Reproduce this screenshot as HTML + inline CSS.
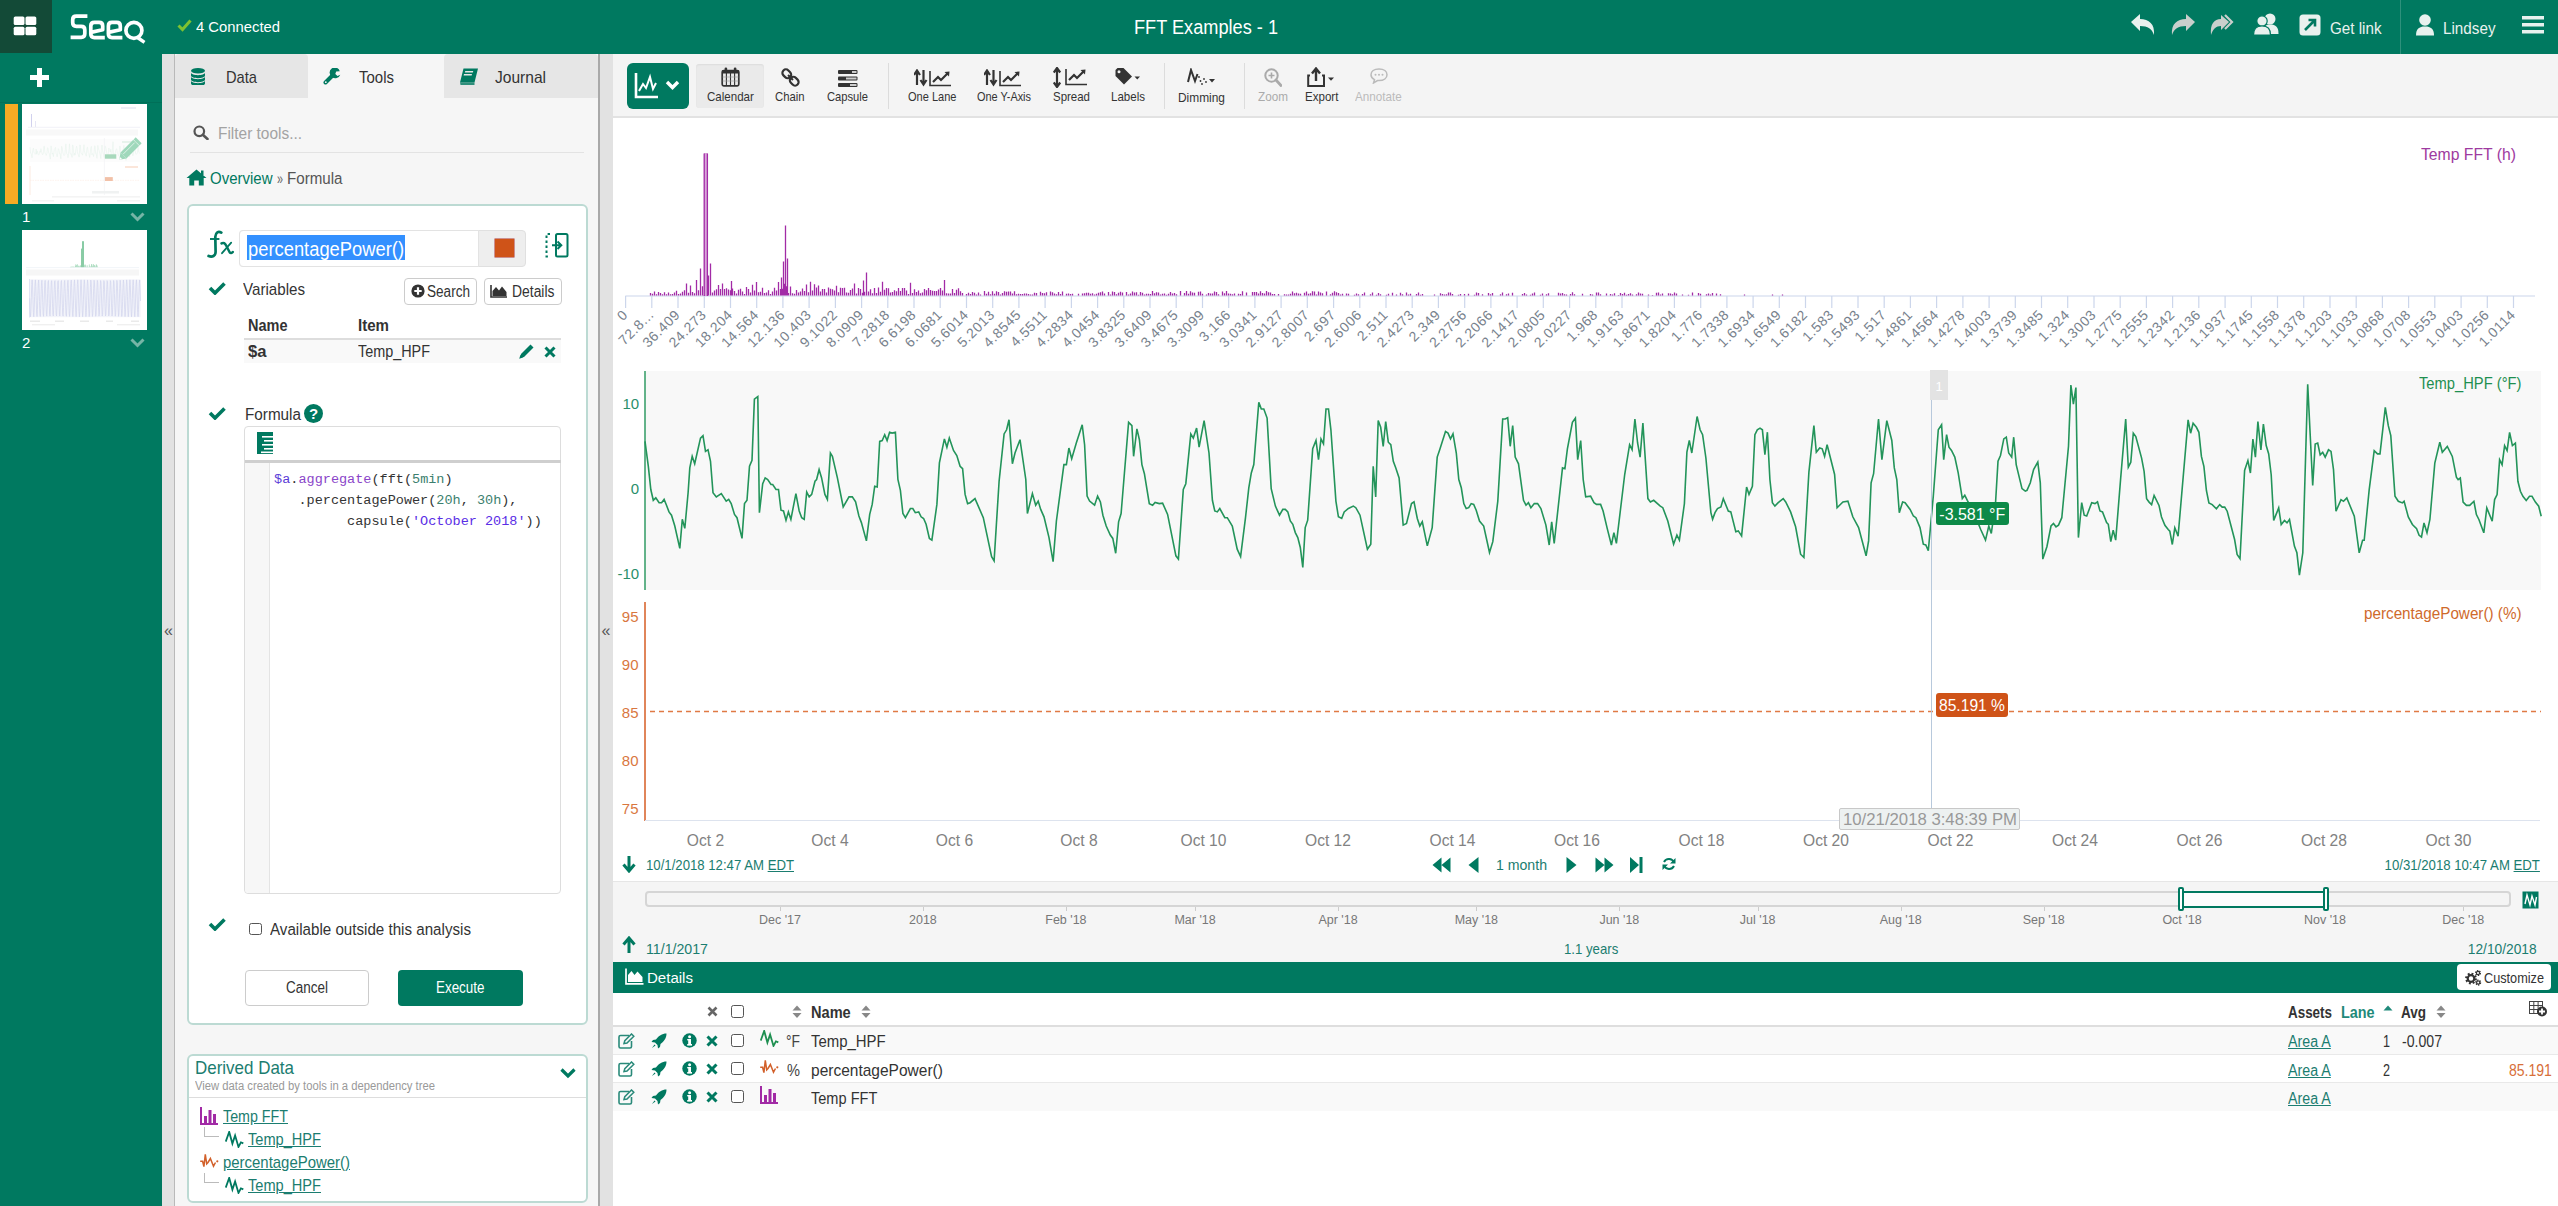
<!DOCTYPE html>
<html><head><meta charset="utf-8"><title>Seeq</title>
<style>
html,body{margin:0;padding:0;width:2558px;height:1206px;overflow:hidden;background:#fff;font-family:'Liberation Sans', sans-serif;}
body{position:relative;}
svg{display:block;}
</style></head><body>
<div style="position:absolute;left:0px;top:0px;width:2558px;height:54px;background:#007960;"></div>
<div style="position:absolute;left:0px;top:0px;width:52px;height:53px;background:#134a37;"></div>
<svg style="position:absolute;left:13px;top:16px;" width="25" height="20" viewBox="0 0 25 20"><rect x="0.7" y="0.4" width="10.8" height="8.6" rx="1.6" fill="#fff"/><rect x="0.7" y="10.7" width="10.8" height="8.6" rx="1.6" fill="#fff"/><rect x="12.5" y="0.4" width="10.8" height="8.6" rx="1.6" fill="#fff"/><rect x="12.5" y="10.7" width="10.8" height="8.6" rx="1.6" fill="#fff"/></svg>
<svg style="position:absolute;left:60px;top:5px;" width="100" height="45" viewBox="60 5 100 45"><g fill="none" stroke="#fff" stroke-width="3.7" stroke-linejoin="round"><path d="M87.4 16.1 L76.3 16.1 Q72.7 16.1 72.7 19.7 L72.7 22.7 Q72.7 26.3 76.3 26.3 L81.2 26.3 Q84.8 26.3 84.8 29.9 L84.8 33.7 Q84.8 37.3 81.2 37.3 L70.6 37.3"/><path d="M104.8 37.6 L94.4 37.6 Q90.8 37.6 90.8 34 L90.8 26 Q90.8 22.4 94.4 22.4 L99.1 22.4 Q102.7 22.4 102.7 26 L102.7 29.8 L90.8 32.4"/><path d="M122.4 37.6 L112 37.6 Q108.4 37.6 108.4 34 L108.4 26 Q108.4 22.4 112 22.4 L116.7 22.4 Q120.3 22.4 120.3 26 L120.3 29.8 L108.4 32.4"/><circle cx="133.9" cy="30.4" r="8"/><path d="M137.5 37.5 L144.5 42.3" stroke-width="3.4"/></g><path d="M135.5 23.2 A7.5 7.5 0 0 1 135.8 37.5" fill="none" stroke="#fff" stroke-width="0.8" opacity="0.6"/></svg>
<svg style="position:absolute;left:177px;top:19px;" width="15" height="13" viewBox="0 0 15 13"><polyline points="1.5,6.5 5.5,10.5 13.5,1.5" fill="none" stroke="#7dc231" stroke-width="3"/></svg>
<span style="position:absolute;left:196.00px;top:19.00px;font:400 15.5px/15.5px 'Liberation Sans', sans-serif;color:#fff;white-space:nowrap;transform:scaleX(0.9556);transform-origin:left 0;">4 Connected</span>
<span style="position:absolute;left:1133.70px;top:16.51px;font:400 20px/20px 'Liberation Sans', sans-serif;color:#fff;white-space:nowrap;transform:scaleX(0.9082);transform-origin:left 0;">FFT Examples - 1</span>
<svg style="position:absolute;left:2130px;top:13px;" width="26" height="23" viewBox="0 0 26 23"><path d="M1 9 L10 1 L10 6 C19 6 25 11 24 22 C22 16 18 13 10 13 L10 18 Z" fill="#e8f1ee"/></svg>
<svg style="position:absolute;left:2170px;top:13px;" width="26" height="23" viewBox="0 0 26 23"><path d="M25 9 L16 1 L16 6 C7 6 1 11 2 22 C4 16 8 13 16 13 L16 18 Z" fill="#c9cfcc"/></svg>
<svg style="position:absolute;left:2210px;top:13px;" width="27" height="23" viewBox="0 0 27 23"><path d="M19 9 L11 2 L11 6 C4 6 0 11 1 22 C3 16 6 13 11 13 L11 17 Z" fill="#c9cfcc"/><path d="M15 2 L22 9 L15 16" fill="none" stroke="#c9cfcc" stroke-width="2.2"/></svg>
<svg style="position:absolute;left:2253px;top:13px;" width="26" height="22" viewBox="0 0 26 22"><circle cx="17" cy="6" r="5.5" fill="#e8f1ee"/><path d="M10 21 C10 14 12 11.5 17 11.5 C23 11.5 25.5 14 25.5 21 Z" fill="#e8f1ee"/><circle cx="9" cy="8" r="5.2" fill="#e8f1ee" stroke="#007960" stroke-width="1.2"/><path d="M0.5 22 C0.5 16 3 13 9 13 C15 13 17.5 16 17.5 22 Z" fill="#e8f1ee" stroke="#007960" stroke-width="1.2"/></svg>
<svg style="position:absolute;left:2299px;top:14px;" width="22" height="22" viewBox="0 0 22 22"><rect x="0.5" y="0.5" width="21" height="21" rx="3.5" fill="#e8f1ee"/><path d="M6 16 L15 7 M9.5 6 L16 6 L16 12.5" fill="none" stroke="#007960" stroke-width="2.6"/></svg>
<span style="position:absolute;left:2329.50px;top:19.71px;font:400 17px/17px 'Liberation Sans', sans-serif;color:#e8f1ee;white-space:nowrap;transform:scaleX(0.8935);transform-origin:left 0;">Get link</span>
<div style="position:absolute;left:2400px;top:0px;width:1px;height:54px;background:rgba(255,255,255,0.18);"></div>
<svg style="position:absolute;left:2416px;top:14px;" width="18" height="22" viewBox="0 0 18 22"><circle cx="9" cy="6" r="5.8" fill="#e8f1ee"/><path d="M0 21.5 C0 15 3 12.5 9 12.5 C15 12.5 18 15 18 21.5 Z" fill="#e8f1ee"/></svg>
<span style="position:absolute;left:2443.00px;top:19.71px;font:400 17px/17px 'Liberation Sans', sans-serif;color:#e8f1ee;white-space:nowrap;transform:scaleX(0.8958);transform-origin:left 0;">Lindsey</span>
<svg style="position:absolute;left:2522px;top:16px;" width="22" height="18" viewBox="0 0 22 18"><rect x="0" y="0" width="22" height="3.5" fill="#e8f1ee"/><rect x="0" y="7" width="22" height="3.5" fill="#e8f1ee"/><rect x="0" y="14" width="22" height="3.5" fill="#e8f1ee"/></svg>
<div style="position:absolute;left:0px;top:54px;width:162px;height:1152px;background:#007960;"></div>
<svg style="position:absolute;left:30px;top:68px;" width="19" height="19" viewBox="0 0 19 19"><rect x="7" y="0" width="5" height="19" fill="#fff"/><rect x="0" y="7" width="19" height="5" fill="#fff"/></svg>
<div style="position:absolute;left:0px;top:102px;width:162px;height:1px;background:rgba(0,0,0,0.08);"></div>
<div style="position:absolute;left:5px;top:103.5px;width:13px;height:100px;background:#f7ab24;"></div>
<div style="position:absolute;left:22px;top:103.5px;width:125px;height:100px;background:#fff;"></div>
<div style="position:absolute;left:22px;top:229.5px;width:125px;height:100px;background:#fff;"></div>
<span style="position:absolute;left:22.00px;top:208.51px;font:400 15px/15px 'Liberation Sans', sans-serif;color:#fff;white-space:nowrap;">1</span>
<span style="position:absolute;left:22.00px;top:334.51px;font:400 15px/15px 'Liberation Sans', sans-serif;color:#fff;white-space:nowrap;">2</span>
<svg style="position:absolute;left:130px;top:212px;" width="15" height="10" viewBox="0 0 15 10"><polyline points="1.5,1.5 7.5,7.5 13.5,1.5" fill="none" stroke="#76b5a6" stroke-width="3"/></svg>
<svg style="position:absolute;left:130px;top:338px;" width="15" height="10" viewBox="0 0 15 10"><polyline points="1.5,1.5 7.5,7.5 13.5,1.5" fill="none" stroke="#76b5a6" stroke-width="3"/></svg>
<div style="position:absolute;left:162px;top:54px;width:13px;height:1152px;background:#e2e2e2;"></div>
<div style="position:absolute;left:174px;top:54px;width:1px;height:1152px;background:#b9b9b9;"></div>
<div style="position:absolute;left:175px;top:54px;width:423px;height:1152px;background:#f6f6f6;"></div>
<div style="position:absolute;left:598px;top:54px;width:1.5px;height:1152px;background:#a9a9a9;"></div>
<div style="position:absolute;left:599.5px;top:54px;width:13px;height:1152px;background:#e2e2e2;"></div>
<span style="position:absolute;left:164.05px;top:623.00px;font:400 16px/16px 'Liberation Sans', sans-serif;color:#555;white-space:nowrap;">&laquo;</span>
<span style="position:absolute;left:601.55px;top:623.00px;font:400 16px/16px 'Liberation Sans', sans-serif;color:#555;white-space:nowrap;">&laquo;</span>
<div style="position:absolute;left:175px;top:54px;width:132.5px;height:44px;background:#e6e6e6;border-radius:4px 4px 0 0;"></div>
<div style="position:absolute;left:444px;top:54px;width:154px;height:44px;background:#e6e6e6;border-radius:4px 4px 0 0;"></div>
<svg style="position:absolute;left:191px;top:68px;" width="14" height="17" viewBox="0 0 14 17"><ellipse cx="7" cy="2.8" rx="7" ry="2.8" fill="#007960"/><path d="M0 4.5 C0 8.0 14 8.0 14 4.5 L14 7.5 C14 11.0 0 11.0 0 7.5 Z" fill="#007960"/><path d="M0 8.5 C0 12.0 14 12.0 14 8.5 L14 11.5 C14 15.0 0 15.0 0 11.5 Z" fill="#007960"/><path d="M0 12.5 C0 16.0 14 16.0 14 12.5 L14 15.5 C14 19.0 0 19.0 0 15.5 Z" fill="#007960"/></svg>
<span style="position:absolute;left:226.00px;top:68.70px;font:400 16.2px/16.2px 'Liberation Sans', sans-serif;color:#333;white-space:nowrap;transform:scaleX(0.9063);transform-origin:left 0;">Data</span>
<svg style="position:absolute;left:323px;top:68px;" width="18" height="18" viewBox="0 0 18 18"><path d="M2.5 14.5 L10 7" stroke="#007960" stroke-width="4" stroke-linecap="round"/><path d="M9 9 A5.2 5.2 0 1 1 16.8 3.2 L13.2 3.6 L12.3 6 L14.5 8 L17.3 6.8 A5.2 5.2 0 0 1 9 9 Z" fill="#007960"/><circle cx="2.8" cy="14.2" r="0.9" fill="#f6f6f6"/></svg>
<span style="position:absolute;left:358.80px;top:69.11px;font:400 16.5px/16.5px 'Liberation Sans', sans-serif;color:#333;white-space:nowrap;transform:scaleX(0.9084);transform-origin:left 0;">Tools</span>
<svg style="position:absolute;left:459px;top:68px;" width="20" height="18" viewBox="0 0 20 18"><path d="M4.5 0.5 L19 0.5 L15.5 14.5 L1 14.5 Z" fill="#007960"/><path d="M1 14.5 L15.5 14.5 L15.5 17 L1.5 17 Z" fill="#007960" opacity="0.8"/><rect x="7" y="3" width="8" height="1.6" fill="#e6e6e6" transform="skewX(-14)"/><rect x="6.5" y="6" width="8" height="1.6" fill="#e6e6e6" transform="skewX(-14)"/></svg>
<span style="position:absolute;left:495.00px;top:69.11px;font:400 16.5px/16.5px 'Liberation Sans', sans-serif;color:#333;white-space:nowrap;transform:scaleX(0.9423);transform-origin:left 0;">Journal</span>
<svg style="position:absolute;left:193px;top:125px;" width="16" height="15" viewBox="0 0 16 15"><circle cx="6.3" cy="6.3" r="4.8" fill="none" stroke="#555" stroke-width="2.2"/><path d="M9.8 9.8 L14.5 14" stroke="#555" stroke-width="2.6" stroke-linecap="round"/></svg>
<span style="position:absolute;left:217.50px;top:125.11px;font:400 16.3px/16.3px 'Liberation Sans', sans-serif;color:#a3a3a3;white-space:nowrap;transform:scaleX(0.9473);transform-origin:left 0;">Filter tools...</span>
<div style="position:absolute;left:189.5px;top:151.5px;width:394px;height:1px;background:#e3e3e3;"></div>
<svg style="position:absolute;left:186px;top:169px;" width="21" height="17" viewBox="0 0 21 17"><path d="M10.5 0.5 L20.5 9 L17.7 9 L17.7 16.5 L12.8 16.5 L12.8 11.5 L8.2 11.5 L8.2 16.5 L3.3 16.5 L3.3 9 L0.5 9 Z" fill="#007960"/><rect x="15" y="1.5" width="2.5" height="4.5" fill="#007960"/></svg>
<span style="position:absolute;left:210.40px;top:169.91px;font:400 16.3px/16.3px 'Liberation Sans', sans-serif;color:#007960;white-space:nowrap;transform:scaleX(0.9210);transform-origin:left 0;">Overview</span>
<span style="position:absolute;left:276.50px;top:169.91px;font:400 16.3px/16.3px 'Liberation Sans', sans-serif;color:#666;white-space:nowrap;transform:scaleX(0.6621);transform-origin:left 0;">&raquo;</span>
<span style="position:absolute;left:287.00px;top:169.91px;font:400 16.3px/16.3px 'Liberation Sans', sans-serif;color:#555;white-space:nowrap;transform:scaleX(0.9294);transform-origin:left 0;">Formula</span>
<div style="position:absolute;left:187.3px;top:203.6px;width:400.4px;height:821.4px;background:#fff;box-sizing:border-box;border:2px solid #bcdad3;border-radius:6px;"></div>
<svg style="position:absolute;left:0px;top:0px;" width="240" height="262" viewBox="0 0 240 262"><g fill="none" stroke="#007960" stroke-linecap="round"><path d="M221.3 232.6 C218.5 230.8 215.6 232.2 215.3 236.8 L215.6 251.8 C215.7 255.8 212.2 257.6 208.6 256" stroke-width="2.7"/><path d="M210 239 L219.4 239" stroke-width="1.9" stroke-linecap="butt"/><path d="M221.5 243.4 C223.5 242.2 225 243.2 226.3 245.8 L229.6 252.2 C230.6 253.6 231.8 253.3 232.8 252" stroke-width="2.5"/><path d="M231.2 242.6 L222 253.2" stroke-width="1.8"/></g></svg>
<div style="position:absolute;left:239.3px;top:229.8px;width:287.2px;height:37px;background:#eee;box-sizing:border-box;border:1px solid #e0e0e0;border-radius:4px;"></div>
<div style="position:absolute;left:239.3px;top:229.8px;width:240.2px;height:37px;background:#fff;box-sizing:border-box;border:1px solid #e3e3e3;border-radius:4px 0 0 4px;"></div>
<div style="position:absolute;left:246.6px;top:235.4px;width:158.4px;height:25.1px;background:#3390ff;"></div>
<span style="position:absolute;left:247.50px;top:238.60px;font:400 20.5px/20.5px 'Liberation Sans', sans-serif;color:#fff;white-space:nowrap;transform:scaleX(0.8948);transform-origin:left 0;">percentagePower()</span>
<div style="position:absolute;left:494.7px;top:238.7px;width:19.1px;height:18.6px;background:#cf5318;box-shadow:0 0 0 0.5px #a33;"></div>
<svg style="position:absolute;left:545px;top:233px;" width="24" height="25" viewBox="0 0 24 25"><path d="M5 1 L1.5 1 L1.5 23.5 L5 23.5" fill="none" stroke="#007960" stroke-width="2" stroke-dasharray="2.4 2.6"/><rect x="11" y="1" width="11.5" height="22.5" rx="1.5" fill="none" stroke="#007960" stroke-width="2"/><path d="M7 12.2 L16 12.2 M12.5 8.5 L16.3 12.2 L12.5 16" fill="none" stroke="#007960" stroke-width="2"/></svg>
<svg style="position:absolute;left:207.5px;top:281px;" width="18" height="14" viewBox="0 0 18 14"><polyline points="2,7 7,12 16.5,2.5" fill="none" stroke="#007960" stroke-width="3.6"/></svg>
<span style="position:absolute;left:243.30px;top:282.40px;font:400 16.6px/16.6px 'Liberation Sans', sans-serif;color:#333;white-space:nowrap;transform:scaleX(0.9124);transform-origin:left 0;">Variables</span>
<div style="position:absolute;left:403.8px;top:277.5px;width:72.8px;height:27px;background:#fff;box-sizing:border-box;border:1px solid #ccc;border-radius:4px;"></div>
<svg style="position:absolute;left:410.5px;top:284px;" width="14" height="14" viewBox="0 0 14 14"><circle cx="7" cy="7" r="6.6" fill="#333"/><path d="M7 3.3 L7 10.7 M3.3 7 L10.7 7" stroke="#fff" stroke-width="2.2"/></svg>
<span style="position:absolute;left:426.50px;top:284.01px;font:400 15.6px/15.6px 'Liberation Sans', sans-serif;color:#333;white-space:nowrap;transform:scaleX(0.8701);transform-origin:left 0;">Search</span>
<div style="position:absolute;left:484px;top:277.5px;width:77.7px;height:27px;background:#fff;box-sizing:border-box;border:1px solid #ccc;border-radius:4px;"></div>
<svg style="position:absolute;left:490px;top:284px;" width="18" height="14" viewBox="0 0 18 14"><path d="M1 1 L1 13 L17 13" fill="none" stroke="#333" stroke-width="1.6"/><path d="M2.5 12 L2.5 7 L6 3 L9 6.5 L12 2.5 L16.5 8 L16.5 12 Z" fill="#333"/></svg>
<span style="position:absolute;left:511.50px;top:284.01px;font:400 15.6px/15.6px 'Liberation Sans', sans-serif;color:#333;white-space:nowrap;transform:scaleX(0.8915);transform-origin:left 0;">Details</span>
<span style="position:absolute;left:248.20px;top:317.60px;font:700 16.6px/16.6px 'Liberation Sans', sans-serif;color:#333;white-space:nowrap;transform:scaleX(0.8738);transform-origin:left 0;">Name</span>
<span style="position:absolute;left:358.20px;top:317.60px;font:700 16.6px/16.6px 'Liberation Sans', sans-serif;color:#333;white-space:nowrap;transform:scaleX(0.9084);transform-origin:left 0;">Item</span>
<div style="position:absolute;left:243.7px;top:337.5px;width:317px;height:2px;background:#ddd;"></div>
<div style="position:absolute;left:243.7px;top:339.5px;width:317px;height:23.5px;background:#f9f9f9;"></div>
<span style="position:absolute;left:248.20px;top:343.01px;font:700 16.2px/16.2px 'Liberation Sans', sans-serif;color:#333;white-space:nowrap;transform:scaleX(1.0269);transform-origin:left 0;">$a</span>
<span style="position:absolute;left:358.20px;top:343.01px;font:400 16.2px/16.2px 'Liberation Sans', sans-serif;color:#333;white-space:nowrap;transform:scaleX(0.8892);transform-origin:left 0;">Temp_HPF</span>
<svg style="position:absolute;left:517.5px;top:343px;" width="17" height="17" viewBox="0 0 17 17"><path d="M2 15 L3 11 L12.5 1.5 L15.5 4.5 L6 14 Z" fill="#007960"/><path d="M1.2 15.8 L2.4 12 L5 14.6 Z" fill="#007960"/></svg>
<svg style="position:absolute;left:544px;top:345.5px;" width="12" height="12" viewBox="0 0 12 12"><path d="M1.5 1.5 L10.5 10.5 M10.5 1.5 L1.5 10.5" stroke="#007960" stroke-width="3"/></svg>
<svg style="position:absolute;left:207.5px;top:406px;" width="18" height="14" viewBox="0 0 18 14"><polyline points="2,7 7,12 16.5,2.5" fill="none" stroke="#007960" stroke-width="3.6"/></svg>
<span style="position:absolute;left:244.50px;top:406.61px;font:400 15.8px/15.8px 'Liberation Sans', sans-serif;color:#333;white-space:nowrap;transform:scaleX(0.9666);transform-origin:left 0;">Formula</span>
<svg style="position:absolute;left:304px;top:404px;" width="19" height="19" viewBox="0 0 19 19"><circle cx="9.5" cy="9.5" r="9.5" fill="#007960"/><text x="9.5" y="15" text-anchor="middle" font-family="Liberation Sans" font-weight="700" font-size="15" fill="#fff">?</text></svg>
<div style="position:absolute;left:244.2px;top:425.6px;width:317.3px;height:468.2px;background:#fff;box-sizing:border-box;border:1px solid #ddd;border-radius:4px;"></div>
<div style="position:absolute;left:244.7px;top:460px;width:316.3px;height:3px;background:#cfcfcf;"></div>
<div style="position:absolute;left:244.7px;top:463px;width:24.6px;height:430px;background:#f7f7f7;border-right:1px solid #e4e4e4;border-radius:0 0 0 4px;"></div>
<svg style="position:absolute;left:257px;top:432px;" width="16" height="22" viewBox="0 0 16 22"><rect x="0" y="0" width="16" height="22" fill="#007960"/><rect x="5" y="4" width="11" height="1.6" fill="#fff"/><rect x="7" y="8" width="9" height="1.6" fill="#fff"/><rect x="5" y="12" width="11" height="1.6" fill="#fff"/><rect x="7" y="16" width="9" height="1.6" fill="#fff"/><rect x="4" y="19.5" width="12" height="1.6" fill="#fff"/></svg>
<span style="position:absolute;left:274.10px;top:473.00px;font:400 13.53px/13.53px 'Liberation Mono', monospace;color:#333;white-space:nowrap;"><span style="color:#5a3bd7">$a</span><span style="color:#333">.</span><span style="color:#8a45c9">aggregate</span><span style="color:#333">(fft(</span><span style="color:#3c7f6e">5min</span><span style="color:#333">)</span></span>
<span style="position:absolute;left:274.10px;top:493.80px;font:400 13.53px/13.53px 'Liberation Mono', monospace;color:#333;white-space:nowrap;">&nbsp;&nbsp;&nbsp;<span style="color:#333">.percentagePower(</span><span style="color:#3c7f6e">20h</span><span style="color:#333">, </span><span style="color:#3c7f6e">30h</span><span style="color:#333">),</span></span>
<span style="position:absolute;left:274.10px;top:514.61px;font:400 13.53px/13.53px 'Liberation Mono', monospace;color:#333;white-space:nowrap;">&nbsp;&nbsp;&nbsp;&nbsp;&nbsp;&nbsp;&nbsp;&nbsp;&nbsp;<span style="color:#333">capsule(</span><span style="color:#5a2ee6">'October 2018'</span><span style="color:#333">))</span></span>
<svg style="position:absolute;left:207.5px;top:916.5px;" width="18" height="14" viewBox="0 0 18 14"><polyline points="2,7 7,12 16.5,2.5" fill="none" stroke="#007960" stroke-width="3.6"/></svg>
<div style="position:absolute;left:249px;top:922.5px;width:12.6px;height:12.7px;background:#fff;box-sizing:border-box;border:1.6px solid #555;border-radius:2.5px;"></div>
<span style="position:absolute;left:270.20px;top:921.21px;font:400 16.3px/16.3px 'Liberation Sans', sans-serif;color:#333;white-space:nowrap;transform:scaleX(0.9305);transform-origin:left 0;">Available outside this analysis</span>
<div style="position:absolute;left:245.3px;top:969.6px;width:124.2px;height:36.7px;background:#fff;box-sizing:border-box;border:1px solid #ccc;border-radius:4px;"></div>
<span style="position:absolute;left:286.40px;top:980.41px;font:400 15.8px/15.8px 'Liberation Sans', sans-serif;color:#333;white-space:nowrap;transform:scaleX(0.8539);transform-origin:left 0;">Cancel</span>
<div style="position:absolute;left:397.9px;top:969.6px;width:124.8px;height:36.7px;background:#007960;border-radius:4px;"></div>
<span style="position:absolute;left:436.05px;top:980.41px;font:400 15.8px/15.8px 'Liberation Sans', sans-serif;color:#fff;white-space:nowrap;transform:scaleX(0.8495);transform-origin:left 0;">Execute</span>
<div style="position:absolute;left:187.3px;top:1054.2px;width:400.4px;height:148.6px;background:#fff;box-sizing:border-box;border:2px solid #bcdad3;border-radius:6px;"></div>
<span style="position:absolute;left:194.50px;top:1058.71px;font:400 18.5px/18.5px 'Liberation Sans', sans-serif;color:#1b7d70;white-space:nowrap;transform:scaleX(0.9169);transform-origin:left 0;">Derived Data</span>
<span style="position:absolute;left:194.50px;top:1079.51px;font:400 12px/12px 'Liberation Sans', sans-serif;color:#999;white-space:nowrap;transform:scaleX(0.9377);transform-origin:left 0;">View data created by tools in a dependency tree</span>
<svg style="position:absolute;left:560px;top:1068px;" width="16" height="11" viewBox="0 0 16 11"><polyline points="1.5,1.5 8,8 14.5,1.5" fill="none" stroke="#007960" stroke-width="3.2"/></svg>
<div style="position:absolute;left:188.8px;top:1097px;width:397.4px;height:1px;background:#ddd;"></div>
<svg style="position:absolute;left:200.2px;top:1106.5px;" width="18" height="18" viewBox="0 0 18 18"><path d="M1 0 L1 17 L18 17" fill="none" stroke="#a12aa5" stroke-width="2"/><rect x="4" y="9" width="3" height="7" fill="#a12aa5"/><rect x="8.5" y="3" width="3" height="13" fill="#a12aa5"/><rect x="13" y="7" width="3" height="9" fill="#a12aa5"/></svg>
<span style="position:absolute;left:223.20px;top:1107.90px;font:400 16.4px/16.4px 'Liberation Sans', sans-serif;color:#1b7d70;white-space:nowrap;transform:scaleX(0.8705);transform-origin:left 0;text-decoration:underline;">Temp FFT</span>
<div style="position:absolute;left:203.5px;top:1127px;width:1px;height:9px;background:#bbb;"></div>
<div style="position:absolute;left:203.5px;top:1135.5px;width:15px;height:1px;background:#bbb;"></div>
<svg style="position:absolute;left:224.6px;top:1130.5px;" width="19" height="17" viewBox="0 0 19 17"><polyline points="0.7,10.6 4.2,0.9 7.4,12.6 10.1,4.5 13.5,15.9 15.9,11.3 18.3,12.4" fill="none" stroke="#007960" stroke-width="1.8" stroke-linejoin="miter" stroke-miterlimit="10"/></svg>
<span style="position:absolute;left:248.10px;top:1130.51px;font:400 16.4px/16.4px 'Liberation Sans', sans-serif;color:#1b7d70;white-space:nowrap;transform:scaleX(0.8904);transform-origin:left 0;text-decoration:underline;">Temp_HPF</span>
<svg style="position:absolute;left:199.5px;top:1153px;" width="19" height="17" viewBox="0 0 19 17"><polyline points="0.2,8.3 2.6,8.3 3.9,13.6 5.3,1.3 6.7,10.8 8,9.5 10.4,5.5 13.5,13.2 15.5,9.5" fill="none" stroke="#d2602a" stroke-width="1.5"/><circle cx="17.3" cy="8.3" r="1.1" fill="#d2602a"/></svg>
<span style="position:absolute;left:223.20px;top:1153.60px;font:400 16.4px/16.4px 'Liberation Sans', sans-serif;color:#1b7d70;white-space:nowrap;transform:scaleX(0.9110);transform-origin:left 0;text-decoration:underline;">percentagePower()</span>
<div style="position:absolute;left:203.5px;top:1173px;width:1px;height:9px;background:#bbb;"></div>
<div style="position:absolute;left:203.5px;top:1181.5px;width:15px;height:1px;background:#bbb;"></div>
<svg style="position:absolute;left:224.6px;top:1177px;" width="19" height="17" viewBox="0 0 19 17"><polyline points="0.7,10.6 4.2,0.9 7.4,12.6 10.1,4.5 13.5,15.9 15.9,11.3 18.3,12.4" fill="none" stroke="#007960" stroke-width="1.8" stroke-linejoin="miter" stroke-miterlimit="10"/></svg>
<span style="position:absolute;left:248.10px;top:1177.01px;font:400 16.4px/16.4px 'Liberation Sans', sans-serif;color:#1b7d70;white-space:nowrap;transform:scaleX(0.8904);transform-origin:left 0;text-decoration:underline;">Temp_HPF</span>
<div style="position:absolute;left:612.5px;top:54px;width:1945.5px;height:63px;background:#f4f4f4;"></div>
<div style="position:absolute;left:612.5px;top:116px;width:1945.5px;height:1.5px;background:#e2e2e2;"></div>
<div style="position:absolute;left:626.9px;top:62.6px;width:61.7px;height:46.9px;background:#007960;border-radius:6px;"></div>
<svg style="position:absolute;left:634px;top:73px;" width="46" height="26" viewBox="0 0 46 26"><path d="M2 0 L2 24 L24 24" fill="none" stroke="#fff" stroke-width="2.6"/><polyline points="5,18 9,11 12,15 16,4 19,16 22,10" fill="none" stroke="#fff" stroke-width="2"/><polyline points="33,9 38.5,14.5 44,9" fill="none" stroke="#fff" stroke-width="3.4"/></svg>
<div style="position:absolute;left:696.4px;top:63.7px;width:67.2px;height:44.3px;background:#eaeaea;border-radius:3px;box-shadow:inset 0 1px 2px rgba(0,0,0,0.06);"></div>
<svg style="position:absolute;left:721px;top:67px;" width="19" height="20" viewBox="0 0 19 20"><rect x="1.2" y="3.5" width="16.6" height="15.3" rx="1.5" fill="none" stroke="#333" stroke-width="1.7"/><rect x="1.2" y="3.5" width="16.6" height="3" fill="#333"/><line x1="5.4" y1="6" x2="5.4" y2="18.5" stroke="#333" stroke-width="1.1"/><line x1="9.5" y1="6" x2="9.5" y2="18.5" stroke="#333" stroke-width="1.1"/><line x1="13.6" y1="6" x2="13.6" y2="18.5" stroke="#333" stroke-width="1.1"/><line x1="1.5" y1="10" x2="17.5" y2="10" stroke="#999" stroke-width="0.6"/><line x1="1.5" y1="14" x2="17.5" y2="14" stroke="#999" stroke-width="0.6"/><rect x="3.6" y="0.5" width="2.6" height="5" rx="1.2" fill="#333"/><rect x="12.8" y="0.5" width="2.6" height="5" rx="1.2" fill="#333"/></svg>
<span style="position:absolute;left:706.50px;top:90.80px;font:400 12.2px/12.2px 'Liberation Sans', sans-serif;color:#333;white-space:nowrap;transform:scaleX(0.9481);transform-origin:left 0;">Calendar</span>
<svg style="position:absolute;left:781px;top:68px;" width="19" height="19" viewBox="0 0 19 19"><g transform="rotate(-45 9.5 9.5)"><rect x="6" y="-0.5" width="7" height="9.5" rx="3.5" fill="none" stroke="#333" stroke-width="2.2"/><rect x="6" y="10" width="7" height="9.5" rx="3.5" fill="none" stroke="#333" stroke-width="2.2"/><line x1="9.5" y1="6" x2="9.5" y2="13" stroke="#333" stroke-width="2"/></g></svg>
<span style="position:absolute;left:775.00px;top:90.80px;font:400 12.2px/12.2px 'Liberation Sans', sans-serif;color:#333;white-space:nowrap;transform:scaleX(0.9295);transform-origin:left 0;">Chain</span>
<svg style="position:absolute;left:837.5px;top:70px;" width="20" height="17" viewBox="0 0 20 17"><rect x="0" y="0" width="19.5" height="4" rx="1" fill="#333"/><rect x="0" y="6.5" width="19.5" height="4" rx="1" fill="#333"/><rect x="0" y="13" width="19.5" height="4" rx="1" fill="#333"/><rect x="14" y="1" width="4.5" height="2" fill="#ccc"/><rect x="8" y="7.5" width="10.5" height="2" fill="#ccc"/><rect x="12" y="14" width="6.5" height="2" fill="#ccc"/></svg>
<span style="position:absolute;left:827.00px;top:90.80px;font:400 12.2px/12.2px 'Liberation Sans', sans-serif;color:#333;white-space:nowrap;transform:scaleX(0.9168);transform-origin:left 0;">Capsule</span>
<div style="position:absolute;left:887.5px;top:62.6px;width:1px;height:46px;background:#dcdcdc;"></div>
<svg style="position:absolute;left:913.5px;top:69px;" width="38" height="18" viewBox="0 0 38 18"><path d="M3 16 L3 3 M0 6 L3 1.5 L6 6" fill="none" stroke="#333" stroke-width="2.2"/><path d="M9.5 1 L9.5 14 M6.5 11 L9.5 15.5 L12.5 11" fill="none" stroke="#333" stroke-width="2.2"/><path d="M16 2 L16 16.5 L37 16.5" fill="none" stroke="#333" stroke-width="1.6"/><polyline points="19,13 24,8 27,11 34,4" fill="none" stroke="#333" stroke-width="2.2"/><path d="M30.5 3 L35.5 2.5 L35 7.5 Z" fill="#333"/></svg>
<span style="position:absolute;left:907.50px;top:90.80px;font:400 12.2px/12.2px 'Liberation Sans', sans-serif;color:#333;white-space:nowrap;transform:scaleX(0.9057);transform-origin:left 0;">One Lane</span>
<svg style="position:absolute;left:984px;top:69px;" width="38" height="18" viewBox="0 0 38 18"><path d="M3 16 L3 3 M0 6 L3 1.5 L6 6" fill="none" stroke="#333" stroke-width="2.2"/><path d="M9.5 1 L9.5 14 M6.5 11 L9.5 15.5 L12.5 11" fill="none" stroke="#333" stroke-width="2.2"/><path d="M16 2 L16 16.5 L37 16.5" fill="none" stroke="#333" stroke-width="1.6"/><polyline points="19,13 24,8 27,11 34,4" fill="none" stroke="#333" stroke-width="2.2"/><path d="M30.5 3 L35.5 2.5 L35 7.5 Z" fill="#333"/></svg>
<span style="position:absolute;left:977.00px;top:90.80px;font:400 12.2px/12.2px 'Liberation Sans', sans-serif;color:#333;white-space:nowrap;transform:scaleX(0.8956);transform-origin:left 0;">One Y-Axis</span>
<svg style="position:absolute;left:1053px;top:67px;" width="37" height="21" viewBox="0 0 37 21"><path d="M4 2.5 L4 18.5 M0.8 5.5 L4 1 L7.2 5.5 M0.8 15.5 L4 20 L7.2 15.5" fill="none" stroke="#333" stroke-width="2.2"/><path d="M13 2 L13 17.5 L34 17.5" fill="none" stroke="#333" stroke-width="1.6"/><polyline points="16,13 21,8 24,11 31,4" fill="none" stroke="#333" stroke-width="2.2"/><path d="M27.5 3 L32.5 2.5 L32 7.5 Z" fill="#333"/></svg>
<span style="position:absolute;left:1052.50px;top:90.80px;font:400 12.2px/12.2px 'Liberation Sans', sans-serif;color:#333;white-space:nowrap;transform:scaleX(0.9412);transform-origin:left 0;">Spread</span>
<svg style="position:absolute;left:1115px;top:68px;" width="26" height="18" viewBox="0 0 26 18"><path d="M0.5 2 L0.5 8 L9 16.5 L17 8.5 L8.5 0 L2.5 0 Z" fill="#333"/><circle cx="4" cy="3.8" r="1.5" fill="#f4f4f4"/><path d="M19.5 8.5 L25 8.5 L22.25 11.5 Z" fill="#333"/></svg>
<span style="position:absolute;left:1111.00px;top:90.80px;font:400 12.2px/12.2px 'Liberation Sans', sans-serif;color:#333;white-space:nowrap;transform:scaleX(0.9465);transform-origin:left 0;">Labels</span>
<div style="position:absolute;left:1164px;top:62.6px;width:1px;height:46px;background:#dcdcdc;"></div>
<svg style="position:absolute;left:1187px;top:68px;" width="29" height="19" viewBox="0 0 29 19"><polyline points="1,14 4,2 8,13 10.5,6" fill="none" stroke="#333" stroke-width="2"/><circle cx="12" cy="9" r="0.9" fill="#333"/><circle cx="13.5" cy="13" r="0.9" fill="#333"/><circle cx="15" cy="16" r="0.9" fill="#333"/><circle cx="17" cy="11" r="0.9" fill="#333"/><circle cx="19" cy="14" r="0.9" fill="#333"/><path d="M22 11 L28 11 L25 14.5 Z" fill="#333"/></svg>
<span style="position:absolute;left:1178.00px;top:91.52px;font:400 12.2px/12.2px 'Liberation Sans', sans-serif;color:#333;white-space:nowrap;transform:scaleX(0.9776);transform-origin:left 0;">Dimming</span>
<div style="position:absolute;left:1244.3px;top:62.6px;width:1px;height:46px;background:#dcdcdc;"></div>
<svg style="position:absolute;left:1263.5px;top:68px;" width="18" height="19" viewBox="0 0 18 19"><circle cx="7.5" cy="7.5" r="6.2" fill="none" stroke="#aaa" stroke-width="2"/><path d="M7.5 4.5 L7.5 10.5 M4.5 7.5 L10.5 7.5" stroke="#aaa" stroke-width="1.6"/><path d="M12 12 L17 17.5" stroke="#aaa" stroke-width="2.8" stroke-linecap="round"/></svg>
<span style="position:absolute;left:1257.80px;top:90.80px;font:400 12.2px/12.2px 'Liberation Sans', sans-serif;color:#aaa;white-space:nowrap;transform:scaleX(0.9597);transform-origin:left 0;">Zoom</span>
<svg style="position:absolute;left:1306.5px;top:67px;" width="28" height="20" viewBox="0 0 28 20"><path d="M3 8.5 L1.2 8.5 L1.2 19 L17 19 L17 8.5 L15 8.5" fill="none" stroke="#333" stroke-width="2"/><path d="M9 14 L9 2.5 M5 6.5 L9 1.5 L13 6.5" fill="none" stroke="#333" stroke-width="2.4"/><path d="M21 10.5 L27 10.5 L24 13.8 Z" fill="#333"/></svg>
<span style="position:absolute;left:1304.60px;top:90.80px;font:400 12.2px/12.2px 'Liberation Sans', sans-serif;color:#333;white-space:nowrap;transform:scaleX(0.9479);transform-origin:left 0;">Export</span>
<svg style="position:absolute;left:1369.5px;top:68px;" width="18" height="16" viewBox="0 0 18 16"><path d="M9 1 C4 1 1 3.5 1 6.8 C1 9 2.5 10.6 4.5 11.6 L3.5 15 L7.5 12.5 C8 12.6 8.5 12.6 9 12.6 C14 12.6 17 10 17 6.8 C17 3.5 14 1 9 1 Z" fill="none" stroke="#bbb" stroke-width="1.5"/><circle cx="5.5" cy="6.8" r="1" fill="#bbb"/><circle cx="9" cy="6.8" r="1" fill="#bbb"/><circle cx="12.5" cy="6.8" r="1" fill="#bbb"/></svg>
<span style="position:absolute;left:1354.70px;top:90.80px;font:400 12.2px/12.2px 'Liberation Sans', sans-serif;color:#bbb;white-space:nowrap;transform:scaleX(0.9591);transform-origin:left 0;">Annotate</span>
<svg style="position:absolute;left:0px;top:0px;pointer-events:none;" width="2558" height="370" viewBox="0 0 2558 370"><line x1="625.3" y1="296" x2="2535" y2="296" stroke="#ccd6eb" stroke-width="1.2"/><line x1="625.6" y1="296" x2="625.6" y2="308" stroke="#ccd6eb" stroke-width="1.2"/><text x="628.6" y="315.5" transform="rotate(-45 628.6 315.5)" text-anchor="end" font-family="Liberation Sans" font-size="13.9" letter-spacing="0.65" fill="#77818c">0</text><line x1="651.8" y1="296" x2="651.8" y2="308" stroke="#ccd6eb" stroke-width="1.2"/><text x="654.8" y="315.5" transform="rotate(-45 654.8 315.5)" text-anchor="end" font-family="Liberation Sans" font-size="13.9" letter-spacing="0.65" fill="#77818c">72.8...</text><line x1="678.0" y1="296" x2="678.0" y2="308" stroke="#ccd6eb" stroke-width="1.2"/><text x="681.0" y="315.5" transform="rotate(-45 681.0 315.5)" text-anchor="end" font-family="Liberation Sans" font-size="13.9" letter-spacing="0.65" fill="#77818c">36.409</text><line x1="704.3" y1="296" x2="704.3" y2="308" stroke="#ccd6eb" stroke-width="1.2"/><text x="707.3" y="315.5" transform="rotate(-45 707.3 315.5)" text-anchor="end" font-family="Liberation Sans" font-size="13.9" letter-spacing="0.65" fill="#77818c">24.273</text><line x1="730.5" y1="296" x2="730.5" y2="308" stroke="#ccd6eb" stroke-width="1.2"/><text x="733.5" y="315.5" transform="rotate(-45 733.5 315.5)" text-anchor="end" font-family="Liberation Sans" font-size="13.9" letter-spacing="0.65" fill="#77818c">18.204</text><line x1="756.7" y1="296" x2="756.7" y2="308" stroke="#ccd6eb" stroke-width="1.2"/><text x="759.7" y="315.5" transform="rotate(-45 759.7 315.5)" text-anchor="end" font-family="Liberation Sans" font-size="13.9" letter-spacing="0.65" fill="#77818c">14.564</text><line x1="782.9" y1="296" x2="782.9" y2="308" stroke="#ccd6eb" stroke-width="1.2"/><text x="785.9" y="315.5" transform="rotate(-45 785.9 315.5)" text-anchor="end" font-family="Liberation Sans" font-size="13.9" letter-spacing="0.65" fill="#77818c">12.136</text><line x1="809.1" y1="296" x2="809.1" y2="308" stroke="#ccd6eb" stroke-width="1.2"/><text x="812.1" y="315.5" transform="rotate(-45 812.1 315.5)" text-anchor="end" font-family="Liberation Sans" font-size="13.9" letter-spacing="0.65" fill="#77818c">10.403</text><line x1="835.4" y1="296" x2="835.4" y2="308" stroke="#ccd6eb" stroke-width="1.2"/><text x="838.4" y="315.5" transform="rotate(-45 838.4 315.5)" text-anchor="end" font-family="Liberation Sans" font-size="13.9" letter-spacing="0.65" fill="#77818c">9.1022</text><line x1="861.6" y1="296" x2="861.6" y2="308" stroke="#ccd6eb" stroke-width="1.2"/><text x="864.6" y="315.5" transform="rotate(-45 864.6 315.5)" text-anchor="end" font-family="Liberation Sans" font-size="13.9" letter-spacing="0.65" fill="#77818c">8.0909</text><line x1="887.8" y1="296" x2="887.8" y2="308" stroke="#ccd6eb" stroke-width="1.2"/><text x="890.8" y="315.5" transform="rotate(-45 890.8 315.5)" text-anchor="end" font-family="Liberation Sans" font-size="13.9" letter-spacing="0.65" fill="#77818c">7.2818</text><line x1="914.0" y1="296" x2="914.0" y2="308" stroke="#ccd6eb" stroke-width="1.2"/><text x="917.0" y="315.5" transform="rotate(-45 917.0 315.5)" text-anchor="end" font-family="Liberation Sans" font-size="13.9" letter-spacing="0.65" fill="#77818c">6.6198</text><line x1="940.2" y1="296" x2="940.2" y2="308" stroke="#ccd6eb" stroke-width="1.2"/><text x="943.2" y="315.5" transform="rotate(-45 943.2 315.5)" text-anchor="end" font-family="Liberation Sans" font-size="13.9" letter-spacing="0.65" fill="#77818c">6.0681</text><line x1="966.5" y1="296" x2="966.5" y2="308" stroke="#ccd6eb" stroke-width="1.2"/><text x="969.5" y="315.5" transform="rotate(-45 969.5 315.5)" text-anchor="end" font-family="Liberation Sans" font-size="13.9" letter-spacing="0.65" fill="#77818c">5.6014</text><line x1="992.7" y1="296" x2="992.7" y2="308" stroke="#ccd6eb" stroke-width="1.2"/><text x="995.7" y="315.5" transform="rotate(-45 995.7 315.5)" text-anchor="end" font-family="Liberation Sans" font-size="13.9" letter-spacing="0.65" fill="#77818c">5.2013</text><line x1="1018.9" y1="296" x2="1018.9" y2="308" stroke="#ccd6eb" stroke-width="1.2"/><text x="1021.9" y="315.5" transform="rotate(-45 1021.9 315.5)" text-anchor="end" font-family="Liberation Sans" font-size="13.9" letter-spacing="0.65" fill="#77818c">4.8545</text><line x1="1045.1" y1="296" x2="1045.1" y2="308" stroke="#ccd6eb" stroke-width="1.2"/><text x="1048.1" y="315.5" transform="rotate(-45 1048.1 315.5)" text-anchor="end" font-family="Liberation Sans" font-size="13.9" letter-spacing="0.65" fill="#77818c">4.5511</text><line x1="1071.4" y1="296" x2="1071.4" y2="308" stroke="#ccd6eb" stroke-width="1.2"/><text x="1074.4" y="315.5" transform="rotate(-45 1074.4 315.5)" text-anchor="end" font-family="Liberation Sans" font-size="13.9" letter-spacing="0.65" fill="#77818c">4.2834</text><line x1="1097.6" y1="296" x2="1097.6" y2="308" stroke="#ccd6eb" stroke-width="1.2"/><text x="1100.6" y="315.5" transform="rotate(-45 1100.6 315.5)" text-anchor="end" font-family="Liberation Sans" font-size="13.9" letter-spacing="0.65" fill="#77818c">4.0454</text><line x1="1123.8" y1="296" x2="1123.8" y2="308" stroke="#ccd6eb" stroke-width="1.2"/><text x="1126.8" y="315.5" transform="rotate(-45 1126.8 315.5)" text-anchor="end" font-family="Liberation Sans" font-size="13.9" letter-spacing="0.65" fill="#77818c">3.8325</text><line x1="1150.0" y1="296" x2="1150.0" y2="308" stroke="#ccd6eb" stroke-width="1.2"/><text x="1153.0" y="315.5" transform="rotate(-45 1153.0 315.5)" text-anchor="end" font-family="Liberation Sans" font-size="13.9" letter-spacing="0.65" fill="#77818c">3.6409</text><line x1="1176.2" y1="296" x2="1176.2" y2="308" stroke="#ccd6eb" stroke-width="1.2"/><text x="1179.2" y="315.5" transform="rotate(-45 1179.2 315.5)" text-anchor="end" font-family="Liberation Sans" font-size="13.9" letter-spacing="0.65" fill="#77818c">3.4675</text><line x1="1202.5" y1="296" x2="1202.5" y2="308" stroke="#ccd6eb" stroke-width="1.2"/><text x="1205.5" y="315.5" transform="rotate(-45 1205.5 315.5)" text-anchor="end" font-family="Liberation Sans" font-size="13.9" letter-spacing="0.65" fill="#77818c">3.3099</text><line x1="1228.7" y1="296" x2="1228.7" y2="308" stroke="#ccd6eb" stroke-width="1.2"/><text x="1231.7" y="315.5" transform="rotate(-45 1231.7 315.5)" text-anchor="end" font-family="Liberation Sans" font-size="13.9" letter-spacing="0.65" fill="#77818c">3.166</text><line x1="1254.9" y1="296" x2="1254.9" y2="308" stroke="#ccd6eb" stroke-width="1.2"/><text x="1257.9" y="315.5" transform="rotate(-45 1257.9 315.5)" text-anchor="end" font-family="Liberation Sans" font-size="13.9" letter-spacing="0.65" fill="#77818c">3.0341</text><line x1="1281.1" y1="296" x2="1281.1" y2="308" stroke="#ccd6eb" stroke-width="1.2"/><text x="1284.1" y="315.5" transform="rotate(-45 1284.1 315.5)" text-anchor="end" font-family="Liberation Sans" font-size="13.9" letter-spacing="0.65" fill="#77818c">2.9127</text><line x1="1307.3" y1="296" x2="1307.3" y2="308" stroke="#ccd6eb" stroke-width="1.2"/><text x="1310.3" y="315.5" transform="rotate(-45 1310.3 315.5)" text-anchor="end" font-family="Liberation Sans" font-size="13.9" letter-spacing="0.65" fill="#77818c">2.8007</text><line x1="1333.6" y1="296" x2="1333.6" y2="308" stroke="#ccd6eb" stroke-width="1.2"/><text x="1336.6" y="315.5" transform="rotate(-45 1336.6 315.5)" text-anchor="end" font-family="Liberation Sans" font-size="13.9" letter-spacing="0.65" fill="#77818c">2.697</text><line x1="1359.8" y1="296" x2="1359.8" y2="308" stroke="#ccd6eb" stroke-width="1.2"/><text x="1362.8" y="315.5" transform="rotate(-45 1362.8 315.5)" text-anchor="end" font-family="Liberation Sans" font-size="13.9" letter-spacing="0.65" fill="#77818c">2.6006</text><line x1="1386.0" y1="296" x2="1386.0" y2="308" stroke="#ccd6eb" stroke-width="1.2"/><text x="1389.0" y="315.5" transform="rotate(-45 1389.0 315.5)" text-anchor="end" font-family="Liberation Sans" font-size="13.9" letter-spacing="0.65" fill="#77818c">2.511</text><line x1="1412.2" y1="296" x2="1412.2" y2="308" stroke="#ccd6eb" stroke-width="1.2"/><text x="1415.2" y="315.5" transform="rotate(-45 1415.2 315.5)" text-anchor="end" font-family="Liberation Sans" font-size="13.9" letter-spacing="0.65" fill="#77818c">2.4273</text><line x1="1438.4" y1="296" x2="1438.4" y2="308" stroke="#ccd6eb" stroke-width="1.2"/><text x="1441.4" y="315.5" transform="rotate(-45 1441.4 315.5)" text-anchor="end" font-family="Liberation Sans" font-size="13.9" letter-spacing="0.65" fill="#77818c">2.349</text><line x1="1464.7" y1="296" x2="1464.7" y2="308" stroke="#ccd6eb" stroke-width="1.2"/><text x="1467.7" y="315.5" transform="rotate(-45 1467.7 315.5)" text-anchor="end" font-family="Liberation Sans" font-size="13.9" letter-spacing="0.65" fill="#77818c">2.2756</text><line x1="1490.9" y1="296" x2="1490.9" y2="308" stroke="#ccd6eb" stroke-width="1.2"/><text x="1493.9" y="315.5" transform="rotate(-45 1493.9 315.5)" text-anchor="end" font-family="Liberation Sans" font-size="13.9" letter-spacing="0.65" fill="#77818c">2.2066</text><line x1="1517.1" y1="296" x2="1517.1" y2="308" stroke="#ccd6eb" stroke-width="1.2"/><text x="1520.1" y="315.5" transform="rotate(-45 1520.1 315.5)" text-anchor="end" font-family="Liberation Sans" font-size="13.9" letter-spacing="0.65" fill="#77818c">2.1417</text><line x1="1543.3" y1="296" x2="1543.3" y2="308" stroke="#ccd6eb" stroke-width="1.2"/><text x="1546.3" y="315.5" transform="rotate(-45 1546.3 315.5)" text-anchor="end" font-family="Liberation Sans" font-size="13.9" letter-spacing="0.65" fill="#77818c">2.0805</text><line x1="1569.6" y1="296" x2="1569.6" y2="308" stroke="#ccd6eb" stroke-width="1.2"/><text x="1572.6" y="315.5" transform="rotate(-45 1572.6 315.5)" text-anchor="end" font-family="Liberation Sans" font-size="13.9" letter-spacing="0.65" fill="#77818c">2.0227</text><line x1="1595.8" y1="296" x2="1595.8" y2="308" stroke="#ccd6eb" stroke-width="1.2"/><text x="1598.8" y="315.5" transform="rotate(-45 1598.8 315.5)" text-anchor="end" font-family="Liberation Sans" font-size="13.9" letter-spacing="0.65" fill="#77818c">1.968</text><line x1="1622.0" y1="296" x2="1622.0" y2="308" stroke="#ccd6eb" stroke-width="1.2"/><text x="1625.0" y="315.5" transform="rotate(-45 1625.0 315.5)" text-anchor="end" font-family="Liberation Sans" font-size="13.9" letter-spacing="0.65" fill="#77818c">1.9163</text><line x1="1648.2" y1="296" x2="1648.2" y2="308" stroke="#ccd6eb" stroke-width="1.2"/><text x="1651.2" y="315.5" transform="rotate(-45 1651.2 315.5)" text-anchor="end" font-family="Liberation Sans" font-size="13.9" letter-spacing="0.65" fill="#77818c">1.8671</text><line x1="1674.4" y1="296" x2="1674.4" y2="308" stroke="#ccd6eb" stroke-width="1.2"/><text x="1677.4" y="315.5" transform="rotate(-45 1677.4 315.5)" text-anchor="end" font-family="Liberation Sans" font-size="13.9" letter-spacing="0.65" fill="#77818c">1.8204</text><line x1="1700.7" y1="296" x2="1700.7" y2="308" stroke="#ccd6eb" stroke-width="1.2"/><text x="1703.7" y="315.5" transform="rotate(-45 1703.7 315.5)" text-anchor="end" font-family="Liberation Sans" font-size="13.9" letter-spacing="0.65" fill="#77818c">1.776</text><line x1="1726.9" y1="296" x2="1726.9" y2="308" stroke="#ccd6eb" stroke-width="1.2"/><text x="1729.9" y="315.5" transform="rotate(-45 1729.9 315.5)" text-anchor="end" font-family="Liberation Sans" font-size="13.9" letter-spacing="0.65" fill="#77818c">1.7338</text><line x1="1753.1" y1="296" x2="1753.1" y2="308" stroke="#ccd6eb" stroke-width="1.2"/><text x="1756.1" y="315.5" transform="rotate(-45 1756.1 315.5)" text-anchor="end" font-family="Liberation Sans" font-size="13.9" letter-spacing="0.65" fill="#77818c">1.6934</text><line x1="1779.3" y1="296" x2="1779.3" y2="308" stroke="#ccd6eb" stroke-width="1.2"/><text x="1782.3" y="315.5" transform="rotate(-45 1782.3 315.5)" text-anchor="end" font-family="Liberation Sans" font-size="13.9" letter-spacing="0.65" fill="#77818c">1.6549</text><line x1="1805.5" y1="296" x2="1805.5" y2="308" stroke="#ccd6eb" stroke-width="1.2"/><text x="1808.5" y="315.5" transform="rotate(-45 1808.5 315.5)" text-anchor="end" font-family="Liberation Sans" font-size="13.9" letter-spacing="0.65" fill="#77818c">1.6182</text><line x1="1831.8" y1="296" x2="1831.8" y2="308" stroke="#ccd6eb" stroke-width="1.2"/><text x="1834.8" y="315.5" transform="rotate(-45 1834.8 315.5)" text-anchor="end" font-family="Liberation Sans" font-size="13.9" letter-spacing="0.65" fill="#77818c">1.583</text><line x1="1858.0" y1="296" x2="1858.0" y2="308" stroke="#ccd6eb" stroke-width="1.2"/><text x="1861.0" y="315.5" transform="rotate(-45 1861.0 315.5)" text-anchor="end" font-family="Liberation Sans" font-size="13.9" letter-spacing="0.65" fill="#77818c">1.5493</text><line x1="1884.2" y1="296" x2="1884.2" y2="308" stroke="#ccd6eb" stroke-width="1.2"/><text x="1887.2" y="315.5" transform="rotate(-45 1887.2 315.5)" text-anchor="end" font-family="Liberation Sans" font-size="13.9" letter-spacing="0.65" fill="#77818c">1.517</text><line x1="1910.4" y1="296" x2="1910.4" y2="308" stroke="#ccd6eb" stroke-width="1.2"/><text x="1913.4" y="315.5" transform="rotate(-45 1913.4 315.5)" text-anchor="end" font-family="Liberation Sans" font-size="13.9" letter-spacing="0.65" fill="#77818c">1.4861</text><line x1="1936.6" y1="296" x2="1936.6" y2="308" stroke="#ccd6eb" stroke-width="1.2"/><text x="1939.6" y="315.5" transform="rotate(-45 1939.6 315.5)" text-anchor="end" font-family="Liberation Sans" font-size="13.9" letter-spacing="0.65" fill="#77818c">1.4564</text><line x1="1962.9" y1="296" x2="1962.9" y2="308" stroke="#ccd6eb" stroke-width="1.2"/><text x="1965.9" y="315.5" transform="rotate(-45 1965.9 315.5)" text-anchor="end" font-family="Liberation Sans" font-size="13.9" letter-spacing="0.65" fill="#77818c">1.4278</text><line x1="1989.1" y1="296" x2="1989.1" y2="308" stroke="#ccd6eb" stroke-width="1.2"/><text x="1992.1" y="315.5" transform="rotate(-45 1992.1 315.5)" text-anchor="end" font-family="Liberation Sans" font-size="13.9" letter-spacing="0.65" fill="#77818c">1.4003</text><line x1="2015.3" y1="296" x2="2015.3" y2="308" stroke="#ccd6eb" stroke-width="1.2"/><text x="2018.3" y="315.5" transform="rotate(-45 2018.3 315.5)" text-anchor="end" font-family="Liberation Sans" font-size="13.9" letter-spacing="0.65" fill="#77818c">1.3739</text><line x1="2041.5" y1="296" x2="2041.5" y2="308" stroke="#ccd6eb" stroke-width="1.2"/><text x="2044.5" y="315.5" transform="rotate(-45 2044.5 315.5)" text-anchor="end" font-family="Liberation Sans" font-size="13.9" letter-spacing="0.65" fill="#77818c">1.3485</text><line x1="2067.7" y1="296" x2="2067.7" y2="308" stroke="#ccd6eb" stroke-width="1.2"/><text x="2070.7" y="315.5" transform="rotate(-45 2070.7 315.5)" text-anchor="end" font-family="Liberation Sans" font-size="13.9" letter-spacing="0.65" fill="#77818c">1.324</text><line x1="2094.0" y1="296" x2="2094.0" y2="308" stroke="#ccd6eb" stroke-width="1.2"/><text x="2097.0" y="315.5" transform="rotate(-45 2097.0 315.5)" text-anchor="end" font-family="Liberation Sans" font-size="13.9" letter-spacing="0.65" fill="#77818c">1.3003</text><line x1="2120.2" y1="296" x2="2120.2" y2="308" stroke="#ccd6eb" stroke-width="1.2"/><text x="2123.2" y="315.5" transform="rotate(-45 2123.2 315.5)" text-anchor="end" font-family="Liberation Sans" font-size="13.9" letter-spacing="0.65" fill="#77818c">1.2775</text><line x1="2146.4" y1="296" x2="2146.4" y2="308" stroke="#ccd6eb" stroke-width="1.2"/><text x="2149.4" y="315.5" transform="rotate(-45 2149.4 315.5)" text-anchor="end" font-family="Liberation Sans" font-size="13.9" letter-spacing="0.65" fill="#77818c">1.2555</text><line x1="2172.6" y1="296" x2="2172.6" y2="308" stroke="#ccd6eb" stroke-width="1.2"/><text x="2175.6" y="315.5" transform="rotate(-45 2175.6 315.5)" text-anchor="end" font-family="Liberation Sans" font-size="13.9" letter-spacing="0.65" fill="#77818c">1.2342</text><line x1="2198.8" y1="296" x2="2198.8" y2="308" stroke="#ccd6eb" stroke-width="1.2"/><text x="2201.8" y="315.5" transform="rotate(-45 2201.8 315.5)" text-anchor="end" font-family="Liberation Sans" font-size="13.9" letter-spacing="0.65" fill="#77818c">1.2136</text><line x1="2225.1" y1="296" x2="2225.1" y2="308" stroke="#ccd6eb" stroke-width="1.2"/><text x="2228.1" y="315.5" transform="rotate(-45 2228.1 315.5)" text-anchor="end" font-family="Liberation Sans" font-size="13.9" letter-spacing="0.65" fill="#77818c">1.1937</text><line x1="2251.3" y1="296" x2="2251.3" y2="308" stroke="#ccd6eb" stroke-width="1.2"/><text x="2254.3" y="315.5" transform="rotate(-45 2254.3 315.5)" text-anchor="end" font-family="Liberation Sans" font-size="13.9" letter-spacing="0.65" fill="#77818c">1.1745</text><line x1="2277.5" y1="296" x2="2277.5" y2="308" stroke="#ccd6eb" stroke-width="1.2"/><text x="2280.5" y="315.5" transform="rotate(-45 2280.5 315.5)" text-anchor="end" font-family="Liberation Sans" font-size="13.9" letter-spacing="0.65" fill="#77818c">1.1558</text><line x1="2303.7" y1="296" x2="2303.7" y2="308" stroke="#ccd6eb" stroke-width="1.2"/><text x="2306.7" y="315.5" transform="rotate(-45 2306.7 315.5)" text-anchor="end" font-family="Liberation Sans" font-size="13.9" letter-spacing="0.65" fill="#77818c">1.1378</text><line x1="2330.0" y1="296" x2="2330.0" y2="308" stroke="#ccd6eb" stroke-width="1.2"/><text x="2333.0" y="315.5" transform="rotate(-45 2333.0 315.5)" text-anchor="end" font-family="Liberation Sans" font-size="13.9" letter-spacing="0.65" fill="#77818c">1.1203</text><line x1="2356.2" y1="296" x2="2356.2" y2="308" stroke="#ccd6eb" stroke-width="1.2"/><text x="2359.2" y="315.5" transform="rotate(-45 2359.2 315.5)" text-anchor="end" font-family="Liberation Sans" font-size="13.9" letter-spacing="0.65" fill="#77818c">1.1033</text><line x1="2382.4" y1="296" x2="2382.4" y2="308" stroke="#ccd6eb" stroke-width="1.2"/><text x="2385.4" y="315.5" transform="rotate(-45 2385.4 315.5)" text-anchor="end" font-family="Liberation Sans" font-size="13.9" letter-spacing="0.65" fill="#77818c">1.0868</text><line x1="2408.6" y1="296" x2="2408.6" y2="308" stroke="#ccd6eb" stroke-width="1.2"/><text x="2411.6" y="315.5" transform="rotate(-45 2411.6 315.5)" text-anchor="end" font-family="Liberation Sans" font-size="13.9" letter-spacing="0.65" fill="#77818c">1.0708</text><line x1="2434.8" y1="296" x2="2434.8" y2="308" stroke="#ccd6eb" stroke-width="1.2"/><text x="2437.8" y="315.5" transform="rotate(-45 2437.8 315.5)" text-anchor="end" font-family="Liberation Sans" font-size="13.9" letter-spacing="0.65" fill="#77818c">1.0553</text><line x1="2461.1" y1="296" x2="2461.1" y2="308" stroke="#ccd6eb" stroke-width="1.2"/><text x="2464.1" y="315.5" transform="rotate(-45 2464.1 315.5)" text-anchor="end" font-family="Liberation Sans" font-size="13.9" letter-spacing="0.65" fill="#77818c">1.0403</text><line x1="2487.3" y1="296" x2="2487.3" y2="308" stroke="#ccd6eb" stroke-width="1.2"/><text x="2490.3" y="315.5" transform="rotate(-45 2490.3 315.5)" text-anchor="end" font-family="Liberation Sans" font-size="13.9" letter-spacing="0.65" fill="#77818c">1.0256</text><line x1="2513.5" y1="296" x2="2513.5" y2="308" stroke="#ccd6eb" stroke-width="1.2"/><text x="2516.5" y="315.5" transform="rotate(-45 2516.5 315.5)" text-anchor="end" font-family="Liberation Sans" font-size="13.9" letter-spacing="0.65" fill="#77818c">1.0114</text><path d="M650.5 295.5V293.0M652.5 295.5V293.8M654.5 295.5V291.6M656.5 295.5V294.2M658.5 295.5V292.1M660.5 295.5V292.9M662.5 295.5V294.2M664.5 295.5V292.2M666.5 295.5V294.3M668.5 295.5V292.5M670.5 295.5V294.2M672.5 295.5V294.1M674.5 295.5V292.6M676.5 295.5V290.8M678.5 295.5V293.9M680.5 295.5V293.5M682.5 295.5V291.7M684.5 295.5V290.2M686.5 295.5V283.5M688.5 295.5V292.7M690.5 295.5V285.5M692.5 295.5V292.1M694.5 295.5V293.2M696.5 295.5V279.9M698.5 295.5V290.2M700.5 295.5V268.5M702.5 295.5V286.3M708.5 295.5V275.5M710.5 295.5V263.5M712.5 295.5V292.4M714.5 295.5V290.6M716.5 295.5V289.3M718.5 295.5V285.0M720.5 295.5V289.1M722.5 295.5V283.5M724.5 295.5V289.0M726.5 295.5V288.3M728.5 295.5V289.5M730.5 295.5V290.2M731.5 295.5V281.0M732.5 295.5V288.5M734.5 295.5V290.9M736.5 295.5V293.6M738.5 295.5V289.8M740.5 295.5V288.7M742.5 295.5V291.5M744.5 295.5V293.9M746.5 295.5V287.1M748.5 295.5V289.0M750.5 295.5V292.4M752.5 295.5V284.8M754.5 295.5V290.4M756.5 295.5V282.0M758.5 295.5V292.2M760.5 295.5V291.7M762.5 295.5V287.8M764.5 295.5V292.9M766.5 295.5V292.5M768.5 295.5V290.2M770.5 295.5V294.0M772.5 295.5V291.6M774.5 295.5V287.8M776.5 295.5V290.6M778.5 295.5V282.1M780.5 295.5V288.9M781.5 295.5V277.5M782.5 295.5V288.8M783.5 295.5V261.5M784.5 295.5V283.7M785.5 295.5V225.5M786.5 295.5V286.2M787.5 295.5V258.5M788.5 295.5V292.9M790.5 295.5V286.6M792.5 295.5V293.3M794.5 295.5V293.8M796.5 295.5V290.0M798.5 295.5V292.4M800.5 295.5V291.6M802.5 295.5V288.5M804.5 295.5V291.0M806.5 295.5V284.5M808.5 295.5V292.3M810.5 295.5V281.8M812.5 295.5V290.6M814.5 295.5V284.3M816.5 295.5V287.6M818.5 295.5V285.5M820.5 295.5V291.6M822.5 295.5V289.0M824.5 295.5V288.9M826.5 295.5V292.6M828.5 295.5V287.6M830.5 295.5V288.8M832.5 295.5V289.2M834.5 295.5V290.6M836.5 295.5V285.8M838.5 295.5V292.3M840.5 295.5V287.8M842.5 295.5V287.9M844.5 295.5V287.8M846.5 295.5V292.6M848.5 295.5V292.7M850.5 295.5V289.9M852.5 295.5V288.5M854.5 295.5V283.5M856.5 295.5V293.4M858.5 295.5V288.1M860.5 295.5V289.1M862.5 295.5V292.8M863.5 295.5V280.5M864.5 295.5V291.8M866.5 295.5V272.5M868.5 295.5V291.4M870.5 295.5V289.3M872.5 295.5V293.2M874.5 295.5V288.1M876.5 295.5V293.0M878.5 295.5V287.6M880.5 295.5V291.7M882.5 295.5V281.7M884.5 295.5V289.8M886.5 295.5V287.9M888.5 295.5V288.3M890.5 295.5V292.6M892.5 295.5V292.1M894.5 295.5V290.2M896.5 295.5V291.3M898.5 295.5V288.1M900.5 295.5V291.0M902.5 295.5V288.1M904.5 295.5V288.0M906.5 295.5V290.5M908.5 295.5V293.9M910.5 295.5V282.7M912.5 295.5V292.9M914.5 295.5V289.3M916.5 295.5V291.9M918.5 295.5V290.4M920.5 295.5V293.3M922.5 295.5V292.4M924.5 295.5V289.0M926.5 295.5V290.3M928.5 295.5V288.1M930.5 295.5V290.0M932.5 295.5V290.7M934.5 295.5V291.1M936.5 295.5V290.9M938.5 295.5V289.5M940.5 295.5V287.9M942.5 295.5V290.4M944.5 295.5V280.0M946.5 295.5V293.2M948.5 295.5V293.5M950.5 295.5V293.5M952.5 295.5V288.9M954.5 295.5V293.0M956.5 295.5V289.7M958.5 295.5V288.3M960.5 295.5V291.2M962.5 295.5V292.9M966.5 295.5V294.1M968.5 295.5V292.8M970.5 295.5V294.0M972.5 295.5V292.0M974.5 295.5V292.7M976.5 295.5V294.6M978.5 295.5V292.4M980.5 295.5V294.5M984.5 295.5V291.1M986.5 295.5V293.7M988.5 295.5V291.8M990.5 295.5V294.2M992.5 295.5V291.3M994.5 295.5V293.7M996.5 295.5V291.3M998.5 295.5V292.1M1000.5 295.5V294.5M1002.5 295.5V293.1M1004.5 295.5V291.2M1006.5 295.5V291.7M1008.5 295.5V291.5M1010.5 295.5V291.5M1012.5 295.5V293.4M1014.5 295.5V291.3M1016.5 295.5V294.2M1018.5 295.5V293.8M1020.5 295.5V294.1M1022.5 295.5V294.0M1024.5 295.5V293.6M1026.5 295.5V293.6M1028.5 295.5V294.0M1030.5 295.5V294.6M1032.5 295.5V294.6M1034.5 295.5V292.7M1036.5 295.5V292.9M1040.5 295.5V291.7M1042.5 295.5V292.9M1044.5 295.5V293.2M1046.5 295.5V292.2M1050.5 295.5V291.6M1052.5 295.5V292.3M1054.5 295.5V293.4M1056.5 295.5V294.2M1058.5 295.5V292.0M1060.5 295.5V294.1M1062.5 295.5V291.6M1066.5 295.5V293.7M1068.5 295.5V293.6M1070.5 295.5V294.1M1072.5 295.5V293.7M1078.5 295.5V293.8M1082.5 295.5V293.4M1084.5 295.5V293.3M1086.5 295.5V292.8M1088.5 295.5V292.8M1090.5 295.5V293.7M1092.5 295.5V293.2M1094.5 295.5V294.6M1096.5 295.5V293.8M1098.5 295.5V292.7M1100.5 295.5V292.3M1102.5 295.5V291.4M1104.5 295.5V293.5M1108.5 295.5V292.0M1110.5 295.5V294.5M1112.5 295.5V291.4M1114.5 295.5V292.0M1116.5 295.5V294.2M1118.5 295.5V292.8M1120.5 295.5V291.7M1122.5 295.5V292.5M1126.5 295.5V292.1M1128.5 295.5V294.6M1130.5 295.5V293.4M1132.5 295.5V291.6M1134.5 295.5V292.4M1136.5 295.5V292.2M1138.5 295.5V294.7M1140.5 295.5V291.9M1142.5 295.5V292.7M1144.5 295.5V294.5M1146.5 295.5V293.8M1148.5 295.5V293.7M1150.5 295.5V293.9M1152.5 295.5V291.1M1154.5 295.5V293.3M1156.5 295.5V292.2M1158.5 295.5V292.4M1160.5 295.5V294.4M1162.5 295.5V293.8M1164.5 295.5V293.6M1166.5 295.5V294.7M1168.5 295.5V293.7M1170.5 295.5V292.1M1172.5 295.5V293.6M1174.5 295.5V293.0M1176.5 295.5V294.3M1180.5 295.5V291.1M1184.5 295.5V293.0M1186.5 295.5V291.1M1188.5 295.5V293.7M1190.5 295.5V291.2M1192.5 295.5V292.5M1194.5 295.5V292.8M1198.5 295.5V291.7M1200.5 295.5V291.4M1202.5 295.5V293.8M1206.5 295.5V294.6M1208.5 295.5V292.9M1210.5 295.5V293.6M1212.5 295.5V293.4M1214.5 295.5V291.6M1216.5 295.5V291.9M1218.5 295.5V294.3M1222.5 295.5V291.4M1224.5 295.5V293.3M1226.5 295.5V291.0M1228.5 295.5V293.4M1230.5 295.5V293.7M1232.5 295.5V294.3M1234.5 295.5V293.6M1238.5 295.5V293.7M1240.5 295.5V294.0M1242.5 295.5V291.2M1246.5 295.5V292.4M1252.5 295.5V292.0M1254.5 295.5V292.0M1256.5 295.5V291.9M1258.5 295.5V293.6M1260.5 295.5V291.3M1262.5 295.5V293.0M1264.5 295.5V293.6M1266.5 295.5V291.1M1268.5 295.5V292.3M1270.5 295.5V292.6M1272.5 295.5V294.1M1274.5 295.5V293.9M1278.5 295.5V293.9M1284.5 295.5V294.2M1286.5 295.5V294.4M1288.5 295.5V294.4M1290.5 295.5V293.7M1292.5 295.5V291.4M1294.5 295.5V293.2M1296.5 295.5V292.8M1298.5 295.5V293.4M1300.5 295.5V293.7M1304.5 295.5V292.8M1306.5 295.5V291.5M1308.5 295.5V293.7M1310.5 295.5V293.2M1312.5 295.5V291.2M1314.5 295.5V291.5M1316.5 295.5V294.6M1318.5 295.5V291.4M1320.5 295.5V292.5M1322.5 295.5V293.3M1326.5 295.5V291.5M1330.5 295.5V294.3M1332.5 295.5V292.8M1334.5 295.5V291.2M1336.5 295.5V292.3M1338.5 295.5V293.0M1340.5 295.5V294.6M1342.5 295.5V293.8M1346.5 295.5V293.6M1348.5 295.5V293.8M1354.5 295.5V294.7M1356.5 295.5V293.4M1358.5 295.5V294.3M1362.5 295.5V294.1M1364.5 295.5V292.4M1370.5 295.5V294.3M1372.5 295.5V292.4M1376.5 295.5V294.8M1378.5 295.5V293.1M1380.5 295.5V294.2M1386.5 295.5V294.8M1388.5 295.5V293.8M1392.5 295.5V292.8M1396.5 295.5V294.4M1400.5 295.5V292.8M1402.5 295.5V294.3M1406.5 295.5V292.4M1408.5 295.5V294.4M1410.5 295.5V293.8M1416.5 295.5V293.9M1418.5 295.5V292.4M1420.5 295.5V294.8M1422.5 295.5V293.9M1434.5 295.5V294.4M1440.5 295.5V293.2M1442.5 295.5V293.9M1444.5 295.5V294.5M1446.5 295.5V294.2M1448.5 295.5V292.4M1450.5 295.5V292.4M1452.5 295.5V294.0M1458.5 295.5V294.8M1460.5 295.5V293.9M1464.5 295.5V294.0M1468.5 295.5V293.8M1474.5 295.5V294.8M1476.5 295.5V292.5M1478.5 295.5V293.0M1482.5 295.5V294.2M1488.5 295.5V293.0M1490.5 295.5V294.2M1492.5 295.5V292.9M1500.5 295.5V294.3M1502.5 295.5V292.4M1506.5 295.5V294.2M1508.5 295.5V293.6M1512.5 295.5V292.8M1522.5 295.5V294.1M1524.5 295.5V292.9M1526.5 295.5V294.4M1530.5 295.5V294.7M1532.5 295.5V293.5M1534.5 295.5V292.4M1540.5 295.5V294.7M1542.5 295.5V293.6M1546.5 295.5V294.3M1548.5 295.5V293.3M1558.5 295.5V292.7M1560.5 295.5V293.4M1562.5 295.5V293.0M1564.5 295.5V294.3M1566.5 295.5V294.5M1570.5 295.5V294.1M1572.5 295.5V292.3M1574.5 295.5V294.3M1582.5 295.5V293.7M1590.5 295.5V294.1M1592.5 295.5V294.4M1596.5 295.5V292.5M1598.5 295.5V292.6M1600.5 295.5V294.2M1606.5 295.5V293.4M1610.5 295.5V293.9M1612.5 295.5V294.4M1614.5 295.5V293.3M1618.5 295.5V294.9M1620.5 295.5V293.1M1622.5 295.5V294.1M1624.5 295.5V292.8M1626.5 295.5V294.7M1628.5 295.5V293.9M1630.5 295.5V293.2M1632.5 295.5V294.5M1636.5 295.5V294.2M1638.5 295.5V292.4M1640.5 295.5V293.4M1642.5 295.5V293.8M1648.5 295.5V294.4M1652.5 295.5V294.9M1656.5 295.5V292.8M1658.5 295.5V292.6M1660.5 295.5V294.5M1662.5 295.5V293.5M1668.5 295.5V293.3M1670.5 295.5V293.6M1672.5 295.5V294.2M1674.5 295.5V292.5M1676.5 295.5V293.6M1682.5 295.5V294.6M1688.5 295.5V294.8M1692.5 295.5V292.5M1698.5 295.5V292.9M1700.5 295.5V293.8M1706.5 295.5V294.3M1708.5 295.5V293.6M1710.5 295.5V294.6M1712.5 295.5V293.0M1716.5 295.5V293.4M1720.5 295.5V294.2M1744.5 295.5V294.4M1772.5 295.5V294.4M1782.5 295.5V294.5" stroke="#a22ba6" stroke-width="1.3" fill="none"/><rect x="704" y="153" width="3.6" height="143" fill="#d9a6da"/><path d="M704.2 296V153.5M707.4 296V153.5" stroke="#a22ba6" stroke-width="1.3"/></svg>
<span style="position:absolute;left:2420.60px;top:146.80px;font:400 16.8px/16.8px 'Liberation Sans', sans-serif;color:#9e3aa0;white-space:nowrap;transform:scaleX(0.9375);transform-origin:left 0;">Temp FFT (h)</span>
<div style="position:absolute;left:645px;top:371px;width:1895.7px;height:219px;background:#f8f8f8;"></div>
<svg style="position:absolute;left:0px;top:0px;pointer-events:none;" width="2558" height="600" viewBox="0 0 2558 600"><line x1="645" y1="371" x2="645" y2="590" stroke="#23945a" stroke-width="1.4"/><polyline points="645.0,441.4 648.3,466.2 650.8,489.5 653.3,500.3 655.8,497.8 659.1,502.7 661.6,502.7 664.1,499.4 666.5,505.2 669.0,511.9 671.5,515.2 674.8,526.0 679.8,548.4 682.3,519.3 684.8,528.4 688.1,492.8 689.8,467.9 692.2,456.3 694.7,463.8 700.5,438.1 703.0,435.6 705.5,451.3 708.0,449.7 710.5,461.3 713.0,492.8 716.3,496.9 721.3,493.6 726.2,501.1 728.7,499.4 731.2,503.6 734.5,514.4 737.0,517.7 742.0,538.4 744.5,503.6 747.0,500.3 749.5,466.2 752.0,460.4 754.4,399.1 757.8,396.6 759.4,512.7 762.7,483.7 765.2,477.9 767.7,479.5 771.0,484.5 772.7,484.5 776.0,489.5 778.5,489.5 781.0,510.2 783.5,511.0 786.0,520.2 788.4,511.9 790.9,519.3 795.9,493.6 799.2,511.0 801.7,517.7 804.2,519.3 806.7,492.0 809.2,496.9 811.7,494.4 815.0,481.2 816.6,479.5 819.1,469.6 821.6,477.9 824.9,494.4 827.4,499.4 830.4,453.0 832.4,456.3 837.4,477.9 843.2,506.9 849.0,496.9 852.3,496.9 855.6,501.9 858.9,516.0 861.4,522.6 866.4,540.9 869.7,514.4 872.2,504.4 874.7,486.2 877.2,487.0 879.7,441.4 882.2,440.5 884.7,434.7 887.1,440.5 889.6,432.2 892.1,433.1 895.4,432.2 897.9,479.5 900.4,490.3 902.9,513.5 905.4,517.7 910.4,508.5 912.8,508.5 915.3,512.7 918.7,511.9 921.1,516.8 923.6,518.5 926.1,524.3 929.4,538.4 931.9,540.1 936.9,504.4 939.4,462.9 944.4,438.9 946.9,447.2 949.3,438.1 953.5,450.5 956.8,455.5 960.1,466.2 962.6,468.7 965.1,494.4 967.6,503.6 970.1,502.7 975.0,498.6 983.3,517.7 991.6,556.6 994.1,560.8 999.1,481.2 1004.1,433.9 1006.6,429.8 1009.0,419.8 1012.4,463.8 1015.0,453.0 1020.0,439.7 1025.8,479.5 1027.4,513.5 1032.4,493.6 1035.7,505.2 1038.2,501.1 1040.7,509.4 1044.0,516.8 1049.0,537.6 1053.1,561.6 1056.4,521.0 1063.9,464.6 1066.4,464.6 1068.9,448.0 1071.7,458.8 1076.3,443.0 1082.2,424.8 1084.6,444.7 1087.1,496.1 1089.6,501.1 1094.6,505.2 1097.6,496.1 1100.4,501.9 1102.9,515.2 1106.2,526.0 1110.3,535.1 1112.8,538.4 1115.7,553.3 1118.6,521.8 1121.1,513.5 1128.6,422.3 1131.9,425.6 1133.6,456.3 1136.9,428.9 1139.4,439.7 1141.9,464.6 1144.4,473.7 1149.3,503.6 1152.6,505.2 1155.1,502.4 1159.3,503.6 1162.6,503.1 1167.6,514.4 1175.9,555.8 1178.4,559.1 1183.3,489.5 1185.8,483.7 1190.8,433.9 1193.3,438.1 1196.6,428.1 1199.1,447.2 1204.1,420.6 1209.0,453.0 1212.4,500.3 1214.8,511.0 1217.3,511.9 1219.8,508.5 1224.8,517.7 1227.3,517.7 1232.3,526.0 1237.2,549.2 1240.6,556.6 1245.5,517.7 1248.8,487.8 1251.3,472.9 1253.8,464.6 1258.8,402.4 1261.3,409.0 1263.8,409.0 1267.1,418.1 1271.2,488.6 1275.4,506.1 1279.5,515.2 1282.8,509.4 1285.3,509.4 1287.8,511.9 1290.3,521.0 1292.8,524.3 1295.3,532.6 1297.8,537.6 1300.3,547.5 1302.8,567.4 1305.2,527.6 1307.7,520.2 1312.7,448.8 1316.0,440.5 1318.5,459.6 1321.0,438.9 1323.5,443.9 1326.0,409.0 1328.5,409.0 1330.9,429.8 1335.9,501.1 1338.4,516.8 1341.7,518.5 1344.2,511.9 1348.4,508.5 1353.3,506.1 1355.8,507.7 1360.0,515.2 1367.4,549.2 1370.8,544.2 1373.2,466.2 1375.7,496.9 1378.2,420.6 1380.7,427.3 1383.2,446.3 1385.7,421.5 1388.3,442.2 1390.8,444.7 1393.3,461.3 1395.8,467.9 1399.1,477.9 1403.2,525.1 1406.5,523.5 1411.5,503.6 1414.0,501.9 1417.3,518.5 1419.8,526.0 1422.3,521.8 1427.3,545.9 1432.2,527.6 1437.2,457.1 1439.7,449.7 1445.5,431.4 1448.0,433.1 1450.5,438.9 1453.0,433.9 1456.3,453.0 1458.8,479.5 1461.3,487.8 1463.8,503.6 1466.2,508.5 1468.7,507.7 1471.2,503.6 1473.7,504.4 1476.2,510.2 1479.5,521.0 1483.7,526.0 1489.5,552.5 1492.8,541.7 1497.8,501.1 1502.7,419.0 1505.2,419.0 1507.7,417.8 1510.2,446.3 1512.7,425.6 1515.2,457.1 1518.5,463.8 1523.5,500.3 1526.0,505.2 1528.4,502.7 1530.9,507.7 1534.3,503.6 1537.6,503.6 1540.9,508.5 1545.9,525.1 1549.2,545.0 1551.7,521.8 1554.2,543.4 1562.5,467.9 1564.9,468.7 1567.4,448.8 1572.4,422.3 1575.4,418.1 1577.7,459.6 1580.7,440.5 1583.2,479.5 1585.7,496.9 1590.6,496.1 1594.0,502.7 1596.5,504.4 1600.6,504.4 1603.1,511.0 1607.2,528.4 1611.4,545.0 1613.9,532.6 1616.4,543.4 1624.7,474.5 1629.6,444.7 1632.1,449.7 1634.9,419.0 1637.6,443.0 1640.1,457.1 1642.9,423.1 1647.9,498.6 1650.4,501.9 1653.7,500.3 1660.3,506.1 1662.8,507.7 1667.8,521.0 1673.6,544.2 1676.9,535.1 1679.4,540.1 1684.4,503.6 1686.9,452.2 1689.3,440.5 1691.8,453.0 1697.1,416.5 1700.1,429.8 1702.6,434.7 1705.9,458.0 1710.9,512.7 1712.6,519.3 1715.0,512.7 1717.5,508.5 1720.9,506.9 1723.3,498.6 1728.3,511.0 1730.8,511.9 1735.8,531.8 1738.3,530.9 1741.6,535.9 1746.6,487.0 1749.0,494.4 1752.4,486.2 1754.9,434.7 1757.3,429.8 1760.0,428.1 1762.4,429.8 1764.9,454.6 1767.4,432.2 1769.9,479.5 1772.4,502.7 1774.9,506.1 1778.2,502.7 1783.2,498.6 1785.7,501.9 1790.6,511.9 1795.6,526.8 1800.6,554.2 1803.9,557.5 1808.9,472.1 1813.9,425.6 1816.3,452.2 1819.7,448.0 1822.2,448.8 1824.6,456.3 1827.1,444.7 1834.6,474.5 1837.1,507.7 1842.9,501.9 1847.9,501.1 1852.8,516.8 1858.6,527.6 1866.1,555.8 1868.6,540.9 1871.1,482.8 1873.6,473.7 1878.5,419.0 1881.9,459.6 1886.8,420.6 1891.8,440.5 1894.3,467.9 1896.8,479.5 1899.3,512.7 1902.6,501.9 1905.1,502.7 1910.1,509.4 1913.4,516.0 1915.9,517.7 1920.0,527.6 1923.3,544.2 1925.8,545.0 1928.3,550.8 1933.3,496.1 1938.3,429.8 1941.6,424.8 1943.7,459.6 1946.6,434.7 1949.0,447.2 1951.5,450.5 1954.8,457.1 1958.2,472.9 1962.3,498.6 1964.8,495.3 1967.3,500.3 1973.9,512.7 1980.6,529.3 1985.5,540.1 1988.8,526.0 1991.3,533.4 1995.5,503.6 1998.0,461.3 2000.5,455.5 2003.8,438.9 2006.3,437.2 2008.7,453.0 2011.7,457.1 2013.7,437.2 2016.2,464.6 2022.0,488.6 2025.3,491.1 2027.0,490.3 2030.3,482.8 2033.6,469.6 2037.8,462.1 2040.3,482.8 2042.8,559.1 2046.9,546.7 2051.0,526.0 2053.5,523.5 2056.0,526.8 2058.5,525.1 2061.8,517.7 2068.5,446.3 2070.9,385.0 2073.4,404.1 2075.9,387.5 2078.4,537.6 2081.7,502.7 2084.2,515.2 2086.7,516.0 2091.7,502.7 2095.0,503.6 2097.5,501.9 2100.0,511.0 2102.5,511.9 2106.6,522.6 2108.3,524.3 2110.8,541.7 2113.2,530.1 2115.7,540.1 2120.7,477.9 2125.7,419.0 2128.3,467.2 2130.8,462.2 2133.3,433.2 2135.8,436.5 2141.6,458.1 2144.1,471.4 2146.6,498.8 2149.1,502.1 2151.6,504.6 2154.1,495.4 2159.0,505.4 2161.5,517.0 2164.9,525.3 2168.2,529.5 2169.8,531.2 2172.3,544.5 2174.8,527.8 2178.1,536.1 2188.1,419.9 2190.6,433.2 2193.1,423.2 2196.4,427.3 2198.9,432.3 2201.4,456.4 2203.9,466.4 2206.4,490.5 2208.9,502.9 2212.2,504.6 2216.4,508.7 2219.7,504.6 2222.2,507.1 2224.7,507.1 2227.2,511.2 2234.6,539.5 2237.1,554.4 2240.0,558.6 2244.6,470.5 2247.9,460.6 2250.4,473.0 2252.9,439.0 2255.4,457.2 2257.9,421.5 2260.9,449.8 2263.4,424.0 2266.2,445.6 2268.7,453.9 2271.2,474.7 2273.7,520.4 2278.7,507.9 2281.2,524.5 2284.5,520.4 2287.0,522.9 2289.5,519.5 2294.4,546.1 2296.9,552.8 2299.4,575.2 2302.8,552.8 2307.7,384.2 2312.7,485.5 2315.2,444.0 2317.7,443.1 2320.2,454.8 2322.7,452.3 2325.2,457.2 2328.5,449.8 2331.0,451.4 2333.5,469.7 2336.0,511.2 2341.0,499.6 2343.5,501.3 2346.8,497.9 2354.3,516.2 2359.2,552.8 2362.6,540.3 2364.2,540.3 2369.2,489.6 2374.2,450.6 2377.5,453.9 2380.0,453.9 2385.3,407.4 2388.3,425.7 2390.8,435.6 2395.0,496.3 2398.3,501.3 2402.4,502.9 2404.1,501.3 2408.3,517.0 2412.4,524.5 2416.6,528.7 2419.1,535.3 2421.5,537.0 2424.0,522.9 2427.0,532.8 2429.9,519.5 2434.8,463.1 2439.8,442.3 2442.3,452.3 2447.3,446.4 2452.3,456.4 2456.4,477.2 2458.1,479.7 2460.3,478.0 2463.1,502.1 2466.4,505.4 2469.7,505.4 2473.9,501.3 2476.4,514.6 2478.9,519.5 2483.8,532.8 2486.8,507.9 2492.2,521.2 2494.6,499.6 2497.1,494.6 2499.6,459.7 2502.1,464.7 2504.6,445.6 2507.1,450.6 2509.6,432.3 2512.4,445.6 2515.4,443.1 2517.9,481.3 2520.4,491.3 2522.9,496.3 2526.2,500.4 2529.5,496.3 2532.0,496.3 2535.4,502.1 2538.7,506.2 2541.2,516.2" fill="none" stroke="#23945a" stroke-width="1.6" stroke-linejoin="miter"/></svg>
<span style="position:absolute;right:1918.80px;top:396.31px;font:400 15px/15px 'Liberation Sans', sans-serif;color:#2a8f6a;white-space:nowrap;">10</span>
<span style="position:absolute;right:1918.80px;top:481.31px;font:400 15px/15px 'Liberation Sans', sans-serif;color:#2a8f6a;white-space:nowrap;">0</span>
<span style="position:absolute;right:1918.80px;top:566.31px;font:400 15px/15px 'Liberation Sans', sans-serif;color:#2a8f6a;white-space:nowrap;">-10</span>
<span style="position:absolute;left:2419.30px;top:375.71px;font:400 16.8px/16.8px 'Liberation Sans', sans-serif;color:#1e8f50;white-space:nowrap;transform:scaleX(0.8781);transform-origin:left 0;">Temp_HPF (&deg;F)</span>
<div style="position:absolute;left:644.2px;top:602px;width:1.4px;height:219px;background:#e0855a;"></div>
<div style="position:absolute;left:645px;top:820px;width:1895px;height:1px;background:#dde3ee;"></div>
<svg style="position:absolute;left:0px;top:600px;" width="2558" height="230" viewBox="0 0 2558 230"><line x1="650" y1="111.5" x2="2541" y2="111.5" stroke="#e07a45" stroke-width="1.3" stroke-dasharray="5 4"/></svg>
<span style="position:absolute;right:1919.50px;top:609.31px;font:400 15px/15px 'Liberation Sans', sans-serif;color:#d9773f;white-space:nowrap;">95</span>
<span style="position:absolute;right:1919.50px;top:657.20px;font:400 15px/15px 'Liberation Sans', sans-serif;color:#d9773f;white-space:nowrap;">90</span>
<span style="position:absolute;right:1919.50px;top:705.11px;font:400 15px/15px 'Liberation Sans', sans-serif;color:#d9773f;white-space:nowrap;">85</span>
<span style="position:absolute;right:1919.50px;top:753.01px;font:400 15px/15px 'Liberation Sans', sans-serif;color:#d9773f;white-space:nowrap;">80</span>
<span style="position:absolute;right:1919.50px;top:800.91px;font:400 15px/15px 'Liberation Sans', sans-serif;color:#d9773f;white-space:nowrap;">75</span>
<span style="position:absolute;left:2364.40px;top:606.41px;font:400 16.8px/16.8px 'Liberation Sans', sans-serif;color:#cf6a2c;white-space:nowrap;transform:scaleX(0.9079);transform-origin:left 0;">percentagePower() (%)</span>
<span style="position:absolute;left:686.87px;top:832.51px;font:400 15.6px/15.6px 'Liberation Sans', sans-serif;color:#828282;white-space:nowrap;">Oct 2</span>
<span style="position:absolute;left:811.37px;top:832.51px;font:400 15.6px/15.6px 'Liberation Sans', sans-serif;color:#828282;white-space:nowrap;">Oct 4</span>
<span style="position:absolute;left:935.87px;top:832.51px;font:400 15.6px/15.6px 'Liberation Sans', sans-serif;color:#828282;white-space:nowrap;">Oct 6</span>
<span style="position:absolute;left:1060.37px;top:832.51px;font:400 15.6px/15.6px 'Liberation Sans', sans-serif;color:#828282;white-space:nowrap;">Oct 8</span>
<span style="position:absolute;left:1180.53px;top:832.51px;font:400 15.6px/15.6px 'Liberation Sans', sans-serif;color:#828282;white-space:nowrap;">Oct 10</span>
<span style="position:absolute;left:1305.03px;top:832.51px;font:400 15.6px/15.6px 'Liberation Sans', sans-serif;color:#828282;white-space:nowrap;">Oct 12</span>
<span style="position:absolute;left:1429.53px;top:832.51px;font:400 15.6px/15.6px 'Liberation Sans', sans-serif;color:#828282;white-space:nowrap;">Oct 14</span>
<span style="position:absolute;left:1554.03px;top:832.51px;font:400 15.6px/15.6px 'Liberation Sans', sans-serif;color:#828282;white-space:nowrap;">Oct 16</span>
<span style="position:absolute;left:1678.53px;top:832.51px;font:400 15.6px/15.6px 'Liberation Sans', sans-serif;color:#828282;white-space:nowrap;">Oct 18</span>
<span style="position:absolute;left:1803.03px;top:832.51px;font:400 15.6px/15.6px 'Liberation Sans', sans-serif;color:#828282;white-space:nowrap;">Oct 20</span>
<span style="position:absolute;left:1927.53px;top:832.51px;font:400 15.6px/15.6px 'Liberation Sans', sans-serif;color:#828282;white-space:nowrap;">Oct 22</span>
<span style="position:absolute;left:2052.03px;top:832.51px;font:400 15.6px/15.6px 'Liberation Sans', sans-serif;color:#828282;white-space:nowrap;">Oct 24</span>
<span style="position:absolute;left:2176.53px;top:832.51px;font:400 15.6px/15.6px 'Liberation Sans', sans-serif;color:#828282;white-space:nowrap;">Oct 26</span>
<span style="position:absolute;left:2301.03px;top:832.51px;font:400 15.6px/15.6px 'Liberation Sans', sans-serif;color:#828282;white-space:nowrap;">Oct 28</span>
<span style="position:absolute;left:2425.53px;top:832.51px;font:400 15.6px/15.6px 'Liberation Sans', sans-serif;color:#828282;white-space:nowrap;">Oct 30</span>
<div style="position:absolute;left:1930.5px;top:371px;width:1.2px;height:450px;background:#b8c9dc;"></div>
<div style="position:absolute;left:1930px;top:370.4px;width:18px;height:29.6px;background:#e3e3e3;"></div>
<span style="position:absolute;left:1935.38px;top:380.00px;font:400 13px/13px 'Liberation Sans', sans-serif;color:#fff;white-space:nowrap;">1</span>
<div style="position:absolute;left:1935.7px;top:501.8px;width:73.3px;height:23.6px;background:#0d8a48;border-radius:3px;"></div>
<span style="position:absolute;left:1939.30px;top:506.50px;font:400 16px/16px 'Liberation Sans', sans-serif;color:#fff;white-space:nowrap;">-3.581 &deg;F</span>
<div style="position:absolute;left:1935.5px;top:693px;width:72.5px;height:23.6px;background:#cf5318;border-radius:3px;"></div>
<span style="position:absolute;left:1938.70px;top:697.50px;font:400 16px/16px 'Liberation Sans', sans-serif;color:#fff;white-space:nowrap;transform:scaleX(0.9762);transform-origin:left 0;">85.191 %</span>
<div style="position:absolute;left:1839px;top:808px;width:181px;height:21.8px;background:#edf1f1;box-sizing:border-box;border:1px solid #c8c8c8;border-radius:2px;"></div>
<span style="position:absolute;left:1842.50px;top:812.00px;font:400 16px/16px 'Liberation Sans', sans-serif;color:#999;white-space:nowrap;transform:scaleX(1.0459);transform-origin:left 0;">10/21/2018 3:48:39 PM</span>
<svg style="position:absolute;left:622px;top:855px;" width="14" height="18" viewBox="0 0 14 18"><path d="M7 1 L7 15 M1.5 9.5 L7 16 L12.5 9.5" fill="none" stroke="#007960" stroke-width="3"/></svg>
<span style="position:absolute;left:645.70px;top:857.70px;font:400 14.5px/14.5px 'Liberation Sans', sans-serif;color:#1b7d70;white-space:nowrap;transform:scaleX(0.9089);transform-origin:left 0;">10/1/2018 12:47 AM <span style="text-decoration:underline">EDT</span></span>
<span style="position:absolute;right:18.10px;top:857.70px;font:400 14.5px/14.5px 'Liberation Sans', sans-serif;color:#1b7d70;white-space:nowrap;transform:scaleX(0.9087);transform-origin:right 0;">10/31/2018 10:47 AM <span style="text-decoration:underline">EDT</span></span>
<svg style="position:absolute;left:1431.7px;top:855.5px;" width="20" height="18" viewBox="0 0 20 18"><path d="M0.5 9 L9.5 1.5 L9.5 16.5 Z M9.5 9 L18.5 1.5 L18.5 16.5 Z" fill="#007960"/></svg>
<svg style="position:absolute;left:1468px;top:855.5px;" width="12" height="18" viewBox="0 0 12 18"><path d="M0.5 9 L10.5 1 L10.5 17 Z" fill="#007960"/></svg>
<span style="position:absolute;left:1496.00px;top:857.70px;font:400 14.5px/14.5px 'Liberation Sans', sans-serif;color:#1b7d70;white-space:nowrap;transform:scaleX(0.9732);transform-origin:left 0;">1 month</span>
<svg style="position:absolute;left:1565px;top:855.5px;" width="12" height="18" viewBox="0 0 12 18"><path d="M11.5 9 L1.5 1 L1.5 17 Z" fill="#007960"/></svg>
<svg style="position:absolute;left:1593.8px;top:855.5px;" width="20" height="18" viewBox="0 0 20 18"><path d="M19.5 9 L10.5 1.5 L10.5 16.5 Z M10.5 9 L1.5 1.5 L1.5 16.5 Z" fill="#007960"/></svg>
<svg style="position:absolute;left:1628.6px;top:855.5px;" width="14" height="18" viewBox="0 0 14 18"><path d="M10 9 L1 1 L1 17 Z" fill="#007960"/><rect x="10.5" y="1" width="3" height="16" fill="#007960"/></svg>
<svg style="position:absolute;left:1661.5px;top:857px;" width="14" height="14" viewBox="0 0 14 14"><path d="M12 5.5 A5.5 5.5 0 0 0 2 5 M2 8.5 A5.5 5.5 0 0 0 12 9" fill="none" stroke="#007960" stroke-width="2"/><path d="M13.5 1 L13.5 6.5 L8 6.5 Z M0.5 13 L0.5 7.5 L6 7.5 Z" fill="#007960"/></svg>
<div style="position:absolute;left:612.5px;top:880.5px;width:1945.5px;height:81.5px;background:#f5f5f5;border-top:1px solid #e6e6e6;box-sizing:border-box;"></div>
<div style="position:absolute;left:645px;top:890.9px;width:1866.4px;height:15.8px;background:#f4f4f4;box-sizing:border-box;border:2px solid #d5d5d5;border-radius:4px;"></div>
<div style="position:absolute;left:779.96px;top:906.5px;width:1px;height:4px;background:#ccc;"></div>
<span style="position:absolute;left:758.96px;top:913.51px;font:400 12.5px/12.5px 'Liberation Sans', sans-serif;color:#777;white-space:nowrap;">Dec '17</span>
<div style="position:absolute;left:922.932px;top:906.5px;width:1px;height:4px;background:#ccc;"></div>
<span style="position:absolute;left:909.03px;top:913.51px;font:400 12.5px/12.5px 'Liberation Sans', sans-serif;color:#777;white-space:nowrap;">2018</span>
<div style="position:absolute;left:1065.904px;top:906.5px;width:1px;height:4px;background:#ccc;"></div>
<span style="position:absolute;left:1045.25px;top:913.51px;font:400 12.5px/12.5px 'Liberation Sans', sans-serif;color:#777;white-space:nowrap;">Feb '18</span>
<div style="position:absolute;left:1195.04px;top:906.5px;width:1px;height:4px;background:#ccc;"></div>
<span style="position:absolute;left:1174.39px;top:913.51px;font:400 12.5px/12.5px 'Liberation Sans', sans-serif;color:#777;white-space:nowrap;">Mar '18</span>
<div style="position:absolute;left:1338.0120000000002px;top:906.5px;width:1px;height:4px;background:#ccc;"></div>
<span style="position:absolute;left:1318.40px;top:913.51px;font:400 12.5px/12.5px 'Liberation Sans', sans-serif;color:#777;white-space:nowrap;">Apr '18</span>
<div style="position:absolute;left:1476.372px;top:906.5px;width:1px;height:4px;background:#ccc;"></div>
<span style="position:absolute;left:1454.68px;top:913.51px;font:400 12.5px/12.5px 'Liberation Sans', sans-serif;color:#777;white-space:nowrap;">May '18</span>
<div style="position:absolute;left:1619.344px;top:906.5px;width:1px;height:4px;background:#ccc;"></div>
<span style="position:absolute;left:1599.38px;top:913.51px;font:400 12.5px/12.5px 'Liberation Sans', sans-serif;color:#777;white-space:nowrap;">Jun '18</span>
<div style="position:absolute;left:1757.7040000000002px;top:906.5px;width:1px;height:4px;background:#ccc;"></div>
<span style="position:absolute;left:1739.83px;top:913.51px;font:400 12.5px/12.5px 'Liberation Sans', sans-serif;color:#777;white-space:nowrap;">Jul '18</span>
<div style="position:absolute;left:1900.676px;top:906.5px;width:1px;height:4px;background:#ccc;"></div>
<span style="position:absolute;left:1879.67px;top:913.51px;font:400 12.5px/12.5px 'Liberation Sans', sans-serif;color:#777;white-space:nowrap;">Aug '18</span>
<div style="position:absolute;left:2043.6480000000001px;top:906.5px;width:1px;height:4px;background:#ccc;"></div>
<span style="position:absolute;left:2022.64px;top:913.51px;font:400 12.5px/12.5px 'Liberation Sans', sans-serif;color:#777;white-space:nowrap;">Sep '18</span>
<div style="position:absolute;left:2182.0080000000003px;top:906.5px;width:1px;height:4px;background:#ccc;"></div>
<span style="position:absolute;left:2162.40px;top:913.51px;font:400 12.5px/12.5px 'Liberation Sans', sans-serif;color:#777;white-space:nowrap;">Oct '18</span>
<div style="position:absolute;left:2324.98px;top:906.5px;width:1px;height:4px;background:#ccc;"></div>
<span style="position:absolute;left:2303.98px;top:913.51px;font:400 12.5px/12.5px 'Liberation Sans', sans-serif;color:#777;white-space:nowrap;">Nov '18</span>
<div style="position:absolute;left:2463.34px;top:906.5px;width:1px;height:4px;background:#ccc;"></div>
<span style="position:absolute;left:2442.34px;top:913.51px;font:400 12.5px/12.5px 'Liberation Sans', sans-serif;color:#777;white-space:nowrap;">Dec '18</span>
<div style="position:absolute;left:2180px;top:890.5px;width:146.5px;height:17px;background:#fcfdfd;box-sizing:border-box;border:2.5px solid #007960;"></div>
<div style="position:absolute;left:2177.5px;top:887px;width:6px;height:24px;background:#fff;box-sizing:border-box;border:2px solid #007960;border-radius:2px;"></div>
<div style="position:absolute;left:2322.5px;top:887px;width:6px;height:24px;background:#fff;box-sizing:border-box;border:2px solid #007960;border-radius:2px;"></div>
<svg style="position:absolute;left:2521.8px;top:891px;" width="17" height="18" viewBox="0 0 17 18"><rect x="0.5" y="0.5" width="16" height="17" fill="#007960"/><polyline points="3,13 5,4 8,14 10,5 13,14 14.5,6" fill="none" stroke="#fff" stroke-width="1.4"/></svg>
<svg style="position:absolute;left:622px;top:936px;" width="14" height="18" viewBox="0 0 14 18"><path d="M7 17 L7 3 M1.5 8.5 L7 2 L12.5 8.5" fill="none" stroke="#007960" stroke-width="3"/></svg>
<span style="position:absolute;left:645.70px;top:941.51px;font:400 14.5px/14.5px 'Liberation Sans', sans-serif;color:#1b7d70;white-space:nowrap;transform:scaleX(0.9773);transform-origin:left 0;">11/1/2017</span>
<span style="position:absolute;left:1563.90px;top:941.51px;font:400 14.5px/14.5px 'Liberation Sans', sans-serif;color:#1b7d70;white-space:nowrap;transform:scaleX(0.9102);transform-origin:left 0;">1.1 years</span>
<span style="position:absolute;right:21.70px;top:941.51px;font:400 14.5px/14.5px 'Liberation Sans', sans-serif;color:#1b7d70;white-space:nowrap;transform:scaleX(0.9479);transform-origin:right 0;">12/10/2018</span>
<div style="position:absolute;left:612.5px;top:961.5px;width:1945.5px;height:31.7px;background:#007960;"></div>
<svg style="position:absolute;left:624.5px;top:968px;" width="19" height="17" viewBox="0 0 19 17"><path d="M1 0.5 L1 15.8 L18.5 15.8" fill="none" stroke="#fff" stroke-width="1.7"/><path d="M3 14 L3 7 L6.5 3 L9.5 7 L12.5 3.5 L17.5 9 L17.5 14 Z" fill="#fff"/></svg>
<span style="position:absolute;left:647.00px;top:969.80px;font:400 15.3px/15.3px 'Liberation Sans', sans-serif;color:#fff;white-space:nowrap;transform:scaleX(0.9836);transform-origin:left 0;">Details</span>
<div style="position:absolute;left:2457.2px;top:963.8px;width:94px;height:26.4px;background:#fff;border-radius:4px;"></div>
<svg style="position:absolute;left:2464.5px;top:968.5px;" width="17" height="17" viewBox="0 0 17 17"><circle cx="6" cy="9.5" r="4.6" fill="none" stroke="#333" stroke-width="2.6" stroke-dasharray="1.8 1.8"/><circle cx="6" cy="9.5" r="3.3" fill="none" stroke="#333" stroke-width="2.2"/><circle cx="13" cy="4" r="2.3" fill="none" stroke="#333" stroke-width="1.5" stroke-dasharray="1.2 1"/><circle cx="13" cy="4" r="1.6" fill="none" stroke="#333" stroke-width="1.2"/><circle cx="13.2" cy="13.6" r="2.3" fill="none" stroke="#333" stroke-width="1.5" stroke-dasharray="1.2 1"/><circle cx="13.2" cy="13.6" r="1.6" fill="none" stroke="#333" stroke-width="1.2"/></svg>
<span style="position:absolute;left:2484.00px;top:971.01px;font:400 14.5px/14.5px 'Liberation Sans', sans-serif;color:#333;white-space:nowrap;transform:scaleX(0.8759);transform-origin:left 0;">Customize</span>
<svg style="position:absolute;left:706.5px;top:1006px;" width="11" height="11" viewBox="0 0 11 11"><path d="M1.5 1.5 L9.5 9.5 M9.5 1.5 L1.5 9.5" stroke="#666" stroke-width="2.6"/></svg>
<div style="position:absolute;left:731.4px;top:1005.4px;width:12.3px;height:12.3px;background:#fff;box-sizing:border-box;border:1.6px solid #555;border-radius:2.5px;"></div>
<svg style="position:absolute;left:792.4px;top:1004.5px;" width="10" height="14" viewBox="0 0 10 14"><path d="M0.5 5.5 L5 0.5 L9.5 5.5 Z" fill="#888"/><path d="M0.5 8 L5 13 L9.5 8 Z" fill="#888"/></svg>
<span style="position:absolute;left:810.70px;top:1004.61px;font:700 16px/16px 'Liberation Sans', sans-serif;color:#333;white-space:nowrap;transform:scaleX(0.9110);transform-origin:left 0;">Name</span>
<svg style="position:absolute;left:860.8px;top:1004.5px;" width="10" height="14" viewBox="0 0 10 14"><path d="M0.5 5.5 L5 0.5 L9.5 5.5 Z" fill="#888"/><path d="M0.5 8 L5 13 L9.5 8 Z" fill="#888"/></svg>
<span style="position:absolute;left:2288.00px;top:1004.61px;font:700 16px/16px 'Liberation Sans', sans-serif;color:#333;white-space:nowrap;transform:scaleX(0.8383);transform-origin:left 0;">Assets</span>
<span style="position:absolute;left:2340.70px;top:1004.61px;font:700 16px/16px 'Liberation Sans', sans-serif;color:#1f8a7a;white-space:nowrap;transform:scaleX(0.8997);transform-origin:left 0;">Lane</span>
<svg style="position:absolute;left:2383px;top:1004.5px;" width="10" height="14" viewBox="0 0 10 14"><path d="M0.5 5.5 L5 0.5 L9.5 5.5 Z" fill="#1f8a7a"/></svg>
<span style="position:absolute;left:2401.30px;top:1004.61px;font:700 16px/16px 'Liberation Sans', sans-serif;color:#333;white-space:nowrap;transform:scaleX(0.8434);transform-origin:left 0;">Avg</span>
<svg style="position:absolute;left:2436px;top:1004.5px;" width="10" height="14" viewBox="0 0 10 14"><path d="M0.5 5.5 L5 0.5 L9.5 5.5 Z" fill="#888"/><path d="M0.5 8 L5 13 L9.5 8 Z" fill="#888"/></svg>
<svg style="position:absolute;left:2529px;top:1000.5px;" width="19" height="16" viewBox="0 0 19 16"><g stroke="#444" stroke-width="1" fill="none"><rect x="0.5" y="0.5" width="13" height="12"/><line x1="0.5" y1="4.5" x2="13.5" y2="4.5"/><line x1="0.5" y1="8.5" x2="13.5" y2="8.5"/><line x1="4.8" y1="0.5" x2="4.8" y2="12.5"/><line x1="9.1" y1="0.5" x2="9.1" y2="12.5"/></g><circle cx="13" cy="10.5" r="5" fill="#333"/><path d="M13 7.5 L13 13.5 M10 10.5 L16 10.5" stroke="#fff" stroke-width="1.8"/></svg>
<div style="position:absolute;left:612.5px;top:1025px;width:1945.5px;height:2px;background:#dedede;"></div>
<div style="position:absolute;left:612.5px;top:1027px;width:1945.5px;height:27.7px;background:#f9f9f9;"></div>
<div style="position:absolute;left:612.5px;top:1054px;width:1945.5px;height:2px;background:#e9e9e9;"></div>
<svg style="position:absolute;left:617.8px;top:1032.5px;" width="17" height="16" viewBox="0 0 17 16"><path d="M11 2.5 L2.5 2.5 Q1 2.5 1 4 L1 13.5 Q1 15 2.5 15 L12 15 Q13.5 15 13.5 13.5 L13.5 8" fill="none" stroke="#2a8a7a" stroke-width="1.6"/><path d="M6 10.5 L6.8 7.6 L13.5 1 L15.8 3.3 L9 10 Z" fill="none" stroke="#2a8a7a" stroke-width="1.5"/></svg>
<svg style="position:absolute;left:650.6px;top:1032.5px;" width="16" height="16" viewBox="0 0 16 16"><path d="M15.5 0.5 C11 0.5 7.5 3 5 6.5 L2 7 L0.5 9 L4 9.5 L6.5 12 L7 15.5 L9 14 L9.5 11 C13 8.5 15.5 5 15.5 0.5 Z" fill="#007960"/><path d="M3.5 11.5 L1 15 L4.5 12.5 Z" fill="#007960"/></svg>
<svg style="position:absolute;left:681.6px;top:1033.0px;" width="15" height="15" viewBox="0 0 15 15"><circle cx="7.5" cy="7.5" r="7.2" fill="#007960"/><rect x="6.2" y="6" width="2.8" height="6" fill="#fff"/><rect x="5.2" y="11" width="4.8" height="1.6" fill="#fff"/><rect x="5.2" y="6" width="2" height="1.4" fill="#fff"/><circle cx="7.6" cy="3.7" r="1.5" fill="#fff"/></svg>
<svg style="position:absolute;left:706.2px;top:1035.0px;" width="12" height="12" viewBox="0 0 12 12"><path d="M1.5 1.5 L10.5 10.5 M10.5 1.5 L1.5 10.5" stroke="#007960" stroke-width="3"/></svg>
<div style="position:absolute;left:731.4px;top:1034.3px;width:12.3px;height:12.3px;background:#fff;box-sizing:border-box;border:1.6px solid #555;border-radius:2.5px;"></div>
<div style="position:absolute;left:612.5px;top:1055px;width:1945.5px;height:27.7px;background:#fff;"></div>
<div style="position:absolute;left:612.5px;top:1082px;width:1945.5px;height:2px;background:#e9e9e9;"></div>
<svg style="position:absolute;left:617.8px;top:1060.5px;" width="17" height="16" viewBox="0 0 17 16"><path d="M11 2.5 L2.5 2.5 Q1 2.5 1 4 L1 13.5 Q1 15 2.5 15 L12 15 Q13.5 15 13.5 13.5 L13.5 8" fill="none" stroke="#2a8a7a" stroke-width="1.6"/><path d="M6 10.5 L6.8 7.6 L13.5 1 L15.8 3.3 L9 10 Z" fill="none" stroke="#2a8a7a" stroke-width="1.5"/></svg>
<svg style="position:absolute;left:650.6px;top:1060.5px;" width="16" height="16" viewBox="0 0 16 16"><path d="M15.5 0.5 C11 0.5 7.5 3 5 6.5 L2 7 L0.5 9 L4 9.5 L6.5 12 L7 15.5 L9 14 L9.5 11 C13 8.5 15.5 5 15.5 0.5 Z" fill="#007960"/><path d="M3.5 11.5 L1 15 L4.5 12.5 Z" fill="#007960"/></svg>
<svg style="position:absolute;left:681.6px;top:1061.0px;" width="15" height="15" viewBox="0 0 15 15"><circle cx="7.5" cy="7.5" r="7.2" fill="#007960"/><rect x="6.2" y="6" width="2.8" height="6" fill="#fff"/><rect x="5.2" y="11" width="4.8" height="1.6" fill="#fff"/><rect x="5.2" y="6" width="2" height="1.4" fill="#fff"/><circle cx="7.6" cy="3.7" r="1.5" fill="#fff"/></svg>
<svg style="position:absolute;left:706.2px;top:1063.0px;" width="12" height="12" viewBox="0 0 12 12"><path d="M1.5 1.5 L10.5 10.5 M10.5 1.5 L1.5 10.5" stroke="#007960" stroke-width="3"/></svg>
<div style="position:absolute;left:731.4px;top:1062.3px;width:12.3px;height:12.3px;background:#fff;box-sizing:border-box;border:1.6px solid #555;border-radius:2.5px;"></div>
<div style="position:absolute;left:612.5px;top:1083px;width:1945.5px;height:27.6px;background:#f9f9f9;"></div>
<svg style="position:absolute;left:617.8px;top:1088.5px;" width="17" height="16" viewBox="0 0 17 16"><path d="M11 2.5 L2.5 2.5 Q1 2.5 1 4 L1 13.5 Q1 15 2.5 15 L12 15 Q13.5 15 13.5 13.5 L13.5 8" fill="none" stroke="#2a8a7a" stroke-width="1.6"/><path d="M6 10.5 L6.8 7.6 L13.5 1 L15.8 3.3 L9 10 Z" fill="none" stroke="#2a8a7a" stroke-width="1.5"/></svg>
<svg style="position:absolute;left:650.6px;top:1088.5px;" width="16" height="16" viewBox="0 0 16 16"><path d="M15.5 0.5 C11 0.5 7.5 3 5 6.5 L2 7 L0.5 9 L4 9.5 L6.5 12 L7 15.5 L9 14 L9.5 11 C13 8.5 15.5 5 15.5 0.5 Z" fill="#007960"/><path d="M3.5 11.5 L1 15 L4.5 12.5 Z" fill="#007960"/></svg>
<svg style="position:absolute;left:681.6px;top:1089.0px;" width="15" height="15" viewBox="0 0 15 15"><circle cx="7.5" cy="7.5" r="7.2" fill="#007960"/><rect x="6.2" y="6" width="2.8" height="6" fill="#fff"/><rect x="5.2" y="11" width="4.8" height="1.6" fill="#fff"/><rect x="5.2" y="6" width="2" height="1.4" fill="#fff"/><circle cx="7.6" cy="3.7" r="1.5" fill="#fff"/></svg>
<svg style="position:absolute;left:706.2px;top:1091.0px;" width="12" height="12" viewBox="0 0 12 12"><path d="M1.5 1.5 L10.5 10.5 M10.5 1.5 L1.5 10.5" stroke="#007960" stroke-width="3"/></svg>
<div style="position:absolute;left:731.4px;top:1090.3px;width:12.3px;height:12.3px;background:#fff;box-sizing:border-box;border:1.6px solid #555;border-radius:2.5px;"></div>
<svg style="position:absolute;left:759.5px;top:1029.5px;" width="19" height="17" viewBox="0 0 19 17"><polyline points="0.7,10.6 4.2,0.9 7.4,12.6 10.1,4.5 13.5,15.9 15.9,11.3 18.3,12.4" fill="none" stroke="#1e8f50" stroke-width="1.8" stroke-linejoin="miter" stroke-miterlimit="10"/></svg>
<span style="position:absolute;left:786.00px;top:1033.20px;font:400 16.4px/16.4px 'Liberation Sans', sans-serif;color:#444;white-space:nowrap;transform:scaleX(0.8445);transform-origin:left 0;">&deg;F</span>
<span style="position:absolute;left:810.70px;top:1033.20px;font:400 16.4px/16.4px 'Liberation Sans', sans-serif;color:#333;white-space:nowrap;transform:scaleX(0.9111);transform-origin:left 0;">Temp_HPF</span>
<svg style="position:absolute;left:760px;top:1058.5px;" width="19" height="17" viewBox="0 0 19 17"><polyline points="0.2,8.3 2.6,8.3 3.9,13.6 5.3,1.3 6.7,10.8 8,9.5 10.4,5.5 13.5,13.2 15.5,9.5" fill="none" stroke="#d2602a" stroke-width="1.5"/><circle cx="17.3" cy="8.3" r="1.1" fill="#d2602a"/></svg>
<span style="position:absolute;left:786.50px;top:1061.51px;font:400 16.4px/16.4px 'Liberation Sans', sans-serif;color:#444;white-space:nowrap;transform:scaleX(0.8917);transform-origin:left 0;">%</span>
<span style="position:absolute;left:810.70px;top:1061.51px;font:400 16.4px/16.4px 'Liberation Sans', sans-serif;color:#333;white-space:nowrap;transform:scaleX(0.9462);transform-origin:left 0;">percentagePower()</span>
<svg style="position:absolute;left:759.5px;top:1085.5px;" width="18" height="18" viewBox="0 0 18 18"><path d="M1 0 L1 17 L18 17" fill="none" stroke="#a12aa5" stroke-width="2"/><rect x="4" y="9" width="3" height="7" fill="#a12aa5"/><rect x="8.5" y="3" width="3" height="13" fill="#a12aa5"/><rect x="13" y="7" width="3" height="9" fill="#a12aa5"/></svg>
<span style="position:absolute;left:810.70px;top:1089.51px;font:400 16.4px/16.4px 'Liberation Sans', sans-serif;color:#333;white-space:nowrap;transform:scaleX(0.8879);transform-origin:left 0;">Temp FFT</span>
<span style="position:absolute;left:2288.00px;top:1034.20px;font:400 16px/16px 'Liberation Sans', sans-serif;color:#1b7d70;white-space:nowrap;transform:scaleX(0.8911);transform-origin:left 0;text-decoration:underline;">Area A</span>
<span style="position:absolute;left:2288.00px;top:1062.50px;font:400 16px/16px 'Liberation Sans', sans-serif;color:#1b7d70;white-space:nowrap;transform:scaleX(0.8911);transform-origin:left 0;text-decoration:underline;">Area A</span>
<span style="position:absolute;left:2288.00px;top:1090.50px;font:400 16px/16px 'Liberation Sans', sans-serif;color:#1b7d70;white-space:nowrap;transform:scaleX(0.8911);transform-origin:left 0;text-decoration:underline;">Area A</span>
<span style="position:absolute;left:2383.20px;top:1034.20px;font:400 16px/16px 'Liberation Sans', sans-serif;color:#333;white-space:nowrap;transform:scaleX(0.7860);transform-origin:left 0;">1</span>
<span style="position:absolute;left:2401.80px;top:1034.20px;font:400 16px/16px 'Liberation Sans', sans-serif;color:#333;white-space:nowrap;transform:scaleX(0.8815);transform-origin:left 0;">-0.007</span>
<span style="position:absolute;left:2383.20px;top:1062.50px;font:400 16px/16px 'Liberation Sans', sans-serif;color:#333;white-space:nowrap;transform:scaleX(0.7860);transform-origin:left 0;">2</span>
<span style="position:absolute;right:6.30px;top:1062.50px;font:400 16px/16px 'Liberation Sans', sans-serif;color:#d8703a;white-space:nowrap;transform:scaleX(0.8787);transform-origin:right 0;">85.191</span>
<svg style="position:absolute;left:22px;top:103.5px;" width="125" height="100" viewBox="0 0 125 100"><line x1="9.5" y1="10" x2="9.5" y2="23" stroke="#c5c5ea" stroke-width="0.8"/><line x1="13.5" y1="17" x2="13.5" y2="23" stroke="#d5d5ef" stroke-width="0.6"/><line x1="6" y1="23.3" x2="118" y2="23.3" stroke="#eeeef6" stroke-width="0.8"/><rect x="4" y="25.5" width="112" height="6" fill="#f8f8f8"/><line x1="7" y1="9.5" x2="25" y2="9.5" stroke="#f4f4f9" stroke-width="0"/><rect x="99" y="3" width="15" height="2" fill="#eeeef6"/><rect x="8" y="35" width="110" height="23" fill="#fcfcfc"/><polyline points="8.0,43.1 8.5,49.0 9.0,49.2 9.4,50.2 10.0,53.8 10.5,48.2 10.9,45.3 11.5,44.1 11.9,48.2 12.7,49.1 13.2,50.4 13.8,49.3 14.2,45.0 14.6,50.2 15.1,46.9 15.6,47.9 16.0,50.1 16.5,50.9 17.1,50.7 17.5,48.7 18.0,46.9 18.4,48.4 18.9,44.6 19.8,48.7 20.4,50.6 21.0,50.4 21.5,47.7 21.9,42.4 22.3,42.2 22.8,48.0 23.4,49.8 23.9,50.2 24.3,51.4 24.9,49.4 25.5,43.7 26.1,44.5 26.6,48.4 27.1,48.8 28.3,55.1 29.0,41.9 29.5,44.2 30.2,50.3 30.8,49.1 31.4,52.7 32.3,45.4 32.8,44.8 33.5,43.4 34.1,49.5 34.6,50.5 35.1,52.8 35.6,50.3 36.3,44.6 36.8,45.4 37.5,49.5 38.0,49.3 38.9,54.9 39.7,42.3 40.1,43.7 40.9,49.0 41.3,49.8 42.1,51.6 42.8,50.7 43.3,45.4 43.9,39.8 44.6,49.6 45.2,49.9 45.6,51.4 46.0,53.7 46.4,51.0 47.1,44.9 47.5,39.8 48.1,49.1 48.6,50.2 49.2,49.7 50.1,53.4 50.5,41.0 51.0,41.1 51.4,45.1 52.0,51.5 52.6,49.2 53.1,51.2 54.0,44.7 54.6,42.2 55.1,44.2 55.5,49.3 55.9,49.3 56.4,51.1 57.2,53.1 57.9,40.8 58.3,41.5 59.0,49.0 59.4,49.7 60.0,49.8 60.6,51.2 61.4,45.8 62.0,40.7 62.4,46.9 63.1,49.2 63.6,50.1 64.2,52.2 65.1,43.4 65.6,43.2 66.2,48.8 66.9,49.6 67.7,53.4 68.3,49.3 68.7,44.2 69.4,42.4 69.9,50.9 70.4,49.7 71.0,50.2 71.6,52.6 72.2,47.6 72.7,41.7 73.1,42.2 73.6,49.6 74.2,49.2 75.0,54.4 75.8,41.5 76.3,43.8 77.0,46.4 77.8,49.1 78.8,54.6 79.3,46.3 80.0,41.0 80.6,46.9 81.1,49.2 81.7,50.7 82.3,53.5 83.0,41.9 83.5,42.4 84.0,44.7 84.6,48.5 85.5,51.9 86.1,52.3 86.6,44.5 87.1,44.2 87.6,45.4 88.2,48.0 88.8,45.2 89.3,53.6 89.9,51.7 90.6,43.6 91.0,37.7 91.5,50.5 92.1,49.3 92.6,50.2 93.0,53.1 93.6,46.7 94.2,45.2 94.8,44.7 95.3,49.2 95.8,49.5 96.4,51.9 96.8,51.8 97.7,42.2 98.2,42.2 98.6,48.0 99.2,49.8 99.6,49.7 100.4,54.4 101.0,45.0 101.4,44.7 101.9,41.3 102.3,46.4 102.9,51.4 103.4,50.9 104.0,56.5 104.8,47.5 105.2,44.4 105.7,43.9 106.1,50.1 106.7,48.8 107.6,53.0 108.3,44.0 109.0,39.7 109.5,48.6 110.1,49.1 110.8,51.8 111.2,51.3 111.8,45.2 112.6,43.6 113.2,46.9 113.7,49.5 114.3,50.4 114.9,49.8 115.5,48.4 115.9,43.5 116.3,43.5 116.8,48.1 117.3,48.6 117.9,49.6" fill="none" stroke="#e6f3eb" stroke-width="0.55"/><line x1="8" y1="62" x2="8" y2="91" stroke="#fbe4d8" stroke-width="0.8"/><line x1="8" y1="76.3" x2="118" y2="76.3" stroke="#fbe9df" stroke-width="0.6" stroke-dasharray="1.5 1"/><line x1="82.4" y1="34" x2="82.4" y2="91" stroke="#eef0f4" stroke-width="0.6"/><rect x="82.9" y="50.3" width="11.4" height="4.4" fill="#a8d9bc"/><rect x="82.9" y="73.1" width="7.9" height="3.9" fill="#f2c1a8"/><rect x="100" y="37" width="15" height="2" fill="#e8f3ec"/><rect x="103" y="62" width="13" height="2" fill="#fbe6da"/><rect x="70" y="87" width="27" height="2.5" fill="#f0f2f2"/><rect x="30" y="92" width="88" height="1.6" fill="#f4f4f4"/><rect x="10" y="96" width="22" height="1.5" fill="#f4f4f4"/><rect x="95" y="96" width="23" height="1.5" fill="#f4f4f4"/><g transform="translate(105 48) rotate(45)"><rect x="-4.2" y="-13" width="8.4" height="18" fill="#9fd8bb"/><rect x="-4.2" y="-16.5" width="8.4" height="3" fill="#9fd8bb"/><path d="M-4.2 5 L4.2 5 L0 11 Z" fill="#9fd8bb"/><path d="M-1.5 8.5 L1.5 8.5 L0 11 Z" fill="#fff"/><line x1="-1.2" y1="-12" x2="-1.2" y2="4" stroke="#e6f5ed" stroke-width="0.8"/></g></svg>
<svg style="position:absolute;left:22px;top:229.5px;" width="125" height="100" viewBox="0 0 125 100"><rect x="60.2" y="11.2" width="1.6" height="26.3" fill="#6cbf8f"/><rect x="59" y="18.6" width="1.4" height="19" fill="#8ccca6"/><rect x="48.0" y="36.9" width="0.6" height="0.6" fill="#8fd0aa"/><rect x="48.7" y="36.8" width="0.6" height="0.7" fill="#8fd0aa"/><rect x="49.4" y="36.7" width="0.6" height="0.8" fill="#8fd0aa"/><rect x="50.1" y="36.6" width="0.6" height="0.9" fill="#8fd0aa"/><rect x="50.8" y="36.8" width="0.6" height="0.7" fill="#8fd0aa"/><rect x="51.5" y="36.6" width="0.6" height="0.9" fill="#8fd0aa"/><rect x="52.2" y="37.1" width="0.6" height="0.4" fill="#8fd0aa"/><rect x="52.9" y="35.7" width="0.6" height="1.8" fill="#8fd0aa"/><rect x="53.6" y="34.2" width="0.6" height="3.3" fill="#8fd0aa"/><rect x="54.3" y="35.1" width="0.6" height="2.4" fill="#8fd0aa"/><rect x="55.0" y="34.3" width="0.6" height="3.2" fill="#8fd0aa"/><rect x="55.7" y="36.8" width="0.6" height="0.7" fill="#8fd0aa"/><rect x="56.4" y="35.7" width="0.6" height="1.8" fill="#8fd0aa"/><rect x="57.1" y="36.4" width="0.6" height="1.1" fill="#8fd0aa"/><rect x="57.8" y="35.5" width="0.6" height="2.0" fill="#8fd0aa"/><rect x="58.5" y="35.4" width="0.6" height="2.1" fill="#8fd0aa"/><rect x="59.2" y="37.2" width="0.6" height="0.3" fill="#8fd0aa"/><rect x="59.9" y="36.5" width="0.6" height="1.0" fill="#8fd0aa"/><rect x="60.6" y="36.3" width="0.6" height="1.2" fill="#8fd0aa"/><rect x="61.3" y="34.3" width="0.6" height="3.2" fill="#8fd0aa"/><rect x="62.0" y="34.7" width="0.6" height="2.8" fill="#8fd0aa"/><rect x="62.7" y="36.7" width="0.6" height="0.8" fill="#8fd0aa"/><rect x="63.4" y="34.6" width="0.6" height="2.9" fill="#8fd0aa"/><rect x="64.1" y="36.8" width="0.6" height="0.7" fill="#8fd0aa"/><rect x="64.8" y="35.2" width="0.6" height="2.3" fill="#8fd0aa"/><rect x="65.5" y="36.8" width="0.6" height="0.7" fill="#8fd0aa"/><rect x="66.2" y="37.2" width="0.6" height="0.3" fill="#8fd0aa"/><rect x="66.9" y="34.4" width="0.6" height="3.1" fill="#8fd0aa"/><rect x="67.6" y="36.5" width="0.6" height="1.0" fill="#8fd0aa"/><rect x="68.3" y="36.5" width="0.6" height="1.0" fill="#8fd0aa"/><rect x="69.0" y="34.1" width="0.6" height="3.4" fill="#8fd0aa"/><rect x="69.7" y="34.4" width="0.6" height="3.1" fill="#8fd0aa"/><rect x="70.4" y="36.3" width="0.6" height="1.2" fill="#8fd0aa"/><rect x="71.1" y="34.1" width="0.6" height="3.4" fill="#8fd0aa"/><rect x="71.8" y="35.5" width="0.6" height="2.0" fill="#8fd0aa"/><rect x="72.5" y="35.0" width="0.6" height="2.5" fill="#8fd0aa"/><rect x="73.2" y="36.5" width="0.6" height="1.0" fill="#8fd0aa"/><rect x="73.9" y="34.2" width="0.6" height="3.3" fill="#8fd0aa"/><rect x="74.6" y="35.0" width="0.6" height="2.5" fill="#8fd0aa"/><rect x="75.3" y="36.5" width="0.6" height="1.0" fill="#8fd0aa"/><line x1="4" y1="37.6" x2="117" y2="37.6" stroke="#eef1f6" stroke-width="0.8"/><rect x="4" y="39.5" width="113" height="6" fill="#f6f6f6"/><rect x="7.7" y="49.4" width="110.8" height="37.8" fill="#f3f4fa"/><polyline points="7.70,68.30 8.11,81.48 8.51,86.80 8.92,81.08 9.33,67.75 9.74,54.74 10.14,49.82 10.55,55.92 10.96,69.40 11.37,82.23 11.77,86.75 12.18,80.27 12.59,66.66 13.00,54.03 13.40,49.90 13.81,56.73 14.22,70.46 14.62,82.90 15.03,86.64 15.44,79.47 15.85,65.65 16.25,53.41 16.66,50.03 17.07,57.52 17.48,71.42 17.88,83.46 18.29,86.50 18.70,78.71 19.11,64.75 19.51,52.89 19.92,50.19 20.33,58.23 20.74,72.25 21.14,83.92 21.55,86.33 21.96,78.05 22.36,63.99 22.77,52.49 23.18,50.35 23.59,58.83 23.99,72.92 24.40,84.27 24.81,86.18 25.22,77.52 25.62,63.41 26.03,52.20 26.44,50.49 26.85,59.29 27.25,73.41 27.66,84.51 28.07,86.06 28.47,77.14 28.88,63.03 29.29,52.02 29.70,50.59 30.10,59.57 30.51,73.69 30.92,84.64 31.33,85.99 31.73,76.95 32.14,62.85 32.55,51.94 32.96,50.63 33.36,59.67 33.77,73.76 34.18,84.66 34.59,85.98 34.99,76.96 35.40,62.88 35.81,51.97 36.21,50.60 36.62,59.57 37.03,73.63 37.44,84.58 37.84,86.04 38.25,77.16 38.66,63.12 39.07,52.10 39.47,50.51 39.88,59.28 40.29,73.28 40.70,84.39 41.10,86.15 41.51,77.54 41.92,63.56 42.33,52.34 42.73,50.38 43.14,58.81 43.55,72.74 43.95,84.10 44.36,86.30 44.77,78.08 45.18,64.20 45.58,52.69 45.99,50.22 46.40,58.20 46.81,72.02 47.21,83.69 47.62,86.46 48.03,78.74 48.44,65.00 48.84,53.16 49.25,50.06 49.66,57.49 50.06,71.15 50.47,83.17 50.88,86.61 51.29,79.50 51.69,65.93 52.10,53.73 52.51,49.92 52.92,56.70 53.32,70.16 53.73,82.54 54.14,86.73 54.55,80.31 54.95,66.97 55.36,54.40 55.77,49.83 56.18,55.89 56.58,69.08 56.99,81.83 57.40,86.79 57.80,81.12 58.21,68.07 58.62,55.15 59.03,49.80 59.43,55.09 59.84,67.98 60.25,81.05 60.66,86.79 61.06,81.89 61.47,69.18 61.88,55.95 62.29,49.84 62.69,54.34 63.10,66.88 63.51,80.24 63.91,86.72 64.32,82.60 64.73,70.24 65.14,56.77 65.54,49.93 65.95,53.68 66.36,65.85 66.77,79.44 67.17,86.60 67.58,83.22 67.99,71.23 68.40,57.55 68.80,50.07 69.21,53.11 69.62,64.92 70.03,78.68 70.43,86.45 70.84,83.73 71.25,72.09 71.65,58.26 72.06,50.23 72.47,52.66 72.88,64.14 73.28,78.03 73.69,86.28 74.10,84.13 74.51,72.80 74.91,58.86 75.32,50.39 75.73,52.32 76.14,63.52 76.54,77.50 76.95,86.14 77.36,84.41 77.76,73.32 78.17,59.31 78.58,50.52 78.99,52.09 79.39,63.09 79.80,77.13 80.21,86.03 80.62,84.59 81.02,73.65 81.43,59.58 81.84,50.60 82.25,51.96 82.65,62.87 83.06,76.95 83.47,85.98 83.88,84.66 84.28,73.77 84.69,59.67 85.10,50.63 85.50,51.94 85.91,62.85 86.32,76.96 86.73,85.99 87.13,84.63 87.54,73.67 87.95,59.56 88.36,50.58 88.76,52.03 89.17,63.05 89.58,77.17 89.99,86.06 90.39,84.49 90.80,73.37 91.21,59.26 91.61,50.48 92.02,52.22 92.43,63.45 92.84,77.56 93.24,86.19 93.65,84.25 94.06,72.87 94.47,58.79 94.87,50.33 95.28,52.52 95.69,64.05 96.10,78.10 96.50,86.35 96.91,83.89 97.32,72.19 97.73,58.18 98.13,50.17 98.54,52.93 98.95,64.82 99.35,78.77 99.76,86.51 100.17,83.42 100.58,71.34 100.98,57.45 101.39,50.01 101.80,53.45 102.21,65.73 102.61,79.54 103.02,86.65 103.43,82.84 103.84,70.37 104.24,56.66 104.65,49.89 105.06,54.08 105.46,66.75 105.87,80.34 106.28,86.76 106.69,82.17 107.09,69.31 107.50,55.85 107.91,49.81 108.32,54.80 108.72,67.84 109.13,81.15 109.54,86.80 109.95,81.41 110.35,68.21 110.76,55.06 111.17,49.80 111.58,55.58 111.98,68.95 112.39,81.92 112.80,86.78 113.20,80.61 113.61,67.11 114.02,54.31 114.43,49.86 114.83,56.39 115.24,70.03 115.65,82.63 116.06,86.69 116.46,79.80 116.87,66.06 117.28,53.65 117.69,49.97 118.09,57.20 118.50,71.03" fill="none" stroke="#d3d6ee" stroke-width="0.75"/><line x1="7.5" y1="49" x2="7.5" y2="87.5" stroke="#cfd3ee" stroke-width="0.6"/><rect x="8" y="90.5" width="10" height="1.5" fill="#eaeaea"/><rect x="33" y="90.5" width="9" height="1.5" fill="#eaeaea"/><rect x="58" y="90.5" width="9" height="1.5" fill="#eaeaea"/><rect x="84" y="90.5" width="7" height="1.5" fill="#eaeaea"/><rect x="109" y="90.5" width="8" height="1.5" fill="#eaeaea"/><rect x="10" y="94" width="23" height="1.4" fill="#f0f0f0"/><rect x="95" y="94" width="23" height="1.4" fill="#f0f0f0"/></svg>
</body></html>
